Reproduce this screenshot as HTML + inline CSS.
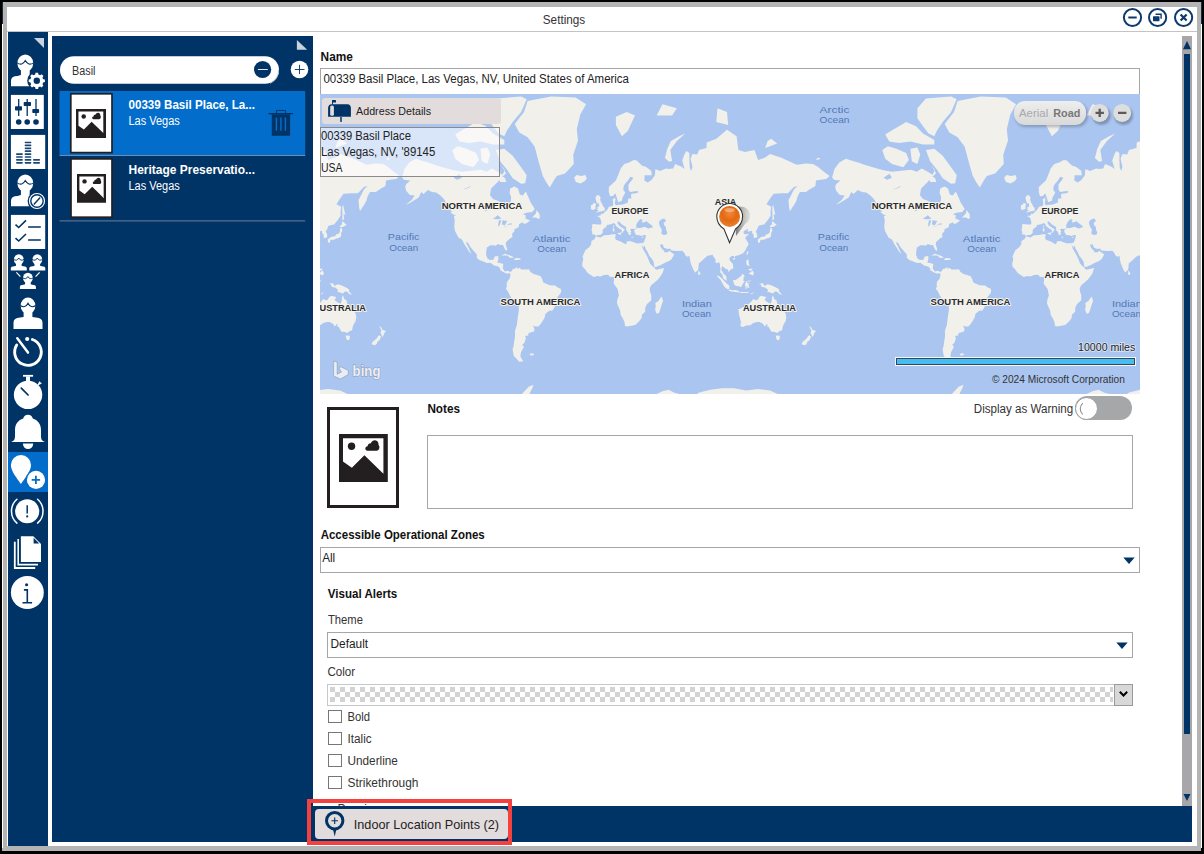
<!DOCTYPE html>
<html><head><meta charset="utf-8">
<style>
*{margin:0;padding:0;box-sizing:border-box}
html,body{width:1204px;height:854px;overflow:hidden;background:#000;font-family:"Liberation Sans",sans-serif}
.a{position:absolute}
.t{position:absolute;white-space:nowrap;line-height:1}
#frame{left:2px;top:2px;width:1199px;height:849px;background:#b4b4b4}
#win{left:7px;top:7px;width:1190px;height:839px;background:#fff}
#tline{left:7px;top:31px;width:1190px;height:1px;background:#c4c4c4}
#nav{left:8px;top:32px;width:40px;height:814px;background:#003366}
#navsel{left:8px;top:452px;width:40px;height:40px;background:#026dcb}
#list{left:52px;top:36px;width:261px;height:806px;background:#003366}
#bbar{left:313px;top:806px;width:879px;height:36px;background:#003366}
.lbl{font-size:11.5px;color:#111;font-weight:bold}
.txt{font-size:11.5px;color:#222}
.inp{border:1px solid #a6a6a6;background:#fff}
.cb{width:14px;height:13px;border:1px solid #767676;background:#fff}
.ml{font-family:"Liberation Sans",sans-serif;font-weight:bold;font-size:9px;fill:#2b2b2b;stroke:#f4f3ef;stroke-width:2;paint-order:stroke;stroke-linejoin:round}
.ol{font-family:"Liberation Sans",sans-serif;font-size:9px;fill:#5478b4;letter-spacing:0.6px}
</style></head>
<body>
<div class="a" id="frame"></div>
<div class="a" id="win"></div>
<div class="a" style="left:2px;top:24px;width:1px;height:824px;background:#fff"></div>
<div class="a" style="left:1.8px;top:2px;width:1.2px;height:22px;background:#1b2a40"></div>
<div class="a" style="left:1201px;top:2px;width:1px;height:22px;background:#1b2a40"></div>
<div class="a" style="left:1201px;top:24px;width:1px;height:824px;background:#fff"></div>
<div class="a" id="tline"></div>
<svg class="a" style="left:1120px;top:5px" width="76" height="26" viewBox="1120 5 76 26">
 <g fill="none" stroke="#0d3a6e" stroke-width="2">
  <circle cx="1132.5" cy="17.5" r="8.6"/>
  <circle cx="1157.6" cy="17.5" r="8.6"/>
  <circle cx="1183.6" cy="17.5" r="8.6"/>
  <path d="M1128.3 17.5h8.4"/>
  <path d="M1180.6 14.5l6 6M1186.6 14.5l-6 6" stroke-width="2.2"/>
 </g>
 <g fill="#0d3a6e">
  <rect x="1153" y="16.2" width="6.5" height="5" rx="0.6"/>
  <path d="M1155.6 13.6h6.2v5.2h-1.4v-3.8h-4.8z"/>
 </g>
</svg>
<div class="a" id="nav"></div>
<div class="a" id="navsel"></div>
<svg class="a" style="left:0;top:0" width="60" height="854" viewBox="0 0 60 854">
<polygon points="34,38 44,38 44,48" fill="#c9d3df"/>
<ellipse cx="25.3" cy="63.2" rx="7.9" ry="8.6" fill="#fff"/><path d="M11.0 86.2 L11.0 80.70 Q11.0 76.20 17.43 76.00 L20.9 75 L20.9 67.50 L29.700000000000003 67.50 L29.700000000000003 75 L33.16 76.00 Q39.6 76.20 39.6 80.70 L39.6 86.2 Z" fill="#fff"/><path d="M16.9 62.90 C20.56 65.09 23.32 64.49 25.3 60.62 C27.28 64.49 30.04 65.09 33.7 62.90" fill="none" stroke="#003366" stroke-width="1.1"/>
<circle cx="36.8" cy="80.8" r="9.6" fill="#003366"/>
<path d="M43.20 79.20 L44.90 79.52 L44.90 82.08 L43.20 82.40 L42.46 84.19 L43.43 85.62 L41.62 87.43 L40.19 86.46 L38.40 87.20 L38.08 88.90 L35.52 88.90 L35.20 87.20 L33.41 86.46 L31.98 87.43 L30.17 85.62 L31.14 84.19 L30.40 82.40 L28.70 82.08 L28.70 79.52 L30.40 79.20 L31.14 77.41 L30.17 75.98 L31.98 74.17 L33.41 75.14 L35.20 74.40 L35.52 72.70 L38.08 72.70 L38.40 74.40 L40.19 75.14 L41.62 74.17 L43.43 75.98 L42.46 77.41Z" fill="#fff"/><circle cx="36.8" cy="80.8" r="3.2" fill="#003366"/>
<rect x="10.9" y="94.9" width="32.9" height="34.1" fill="#fff"/>
<g fill="#003366"><rect x="18.05" y="99" width="1.3" height="17"/><rect x="26.55" y="99" width="1.3" height="17"/><rect x="35.35" y="99" width="1.3" height="17"/><rect x="15" y="106.3" width="7" height="4.2" rx="0.8"/><rect x="23.7" y="102" width="7.3" height="4" rx="0.8"/><rect x="32.3" y="109.1" width="6.8" height="4" rx="0.8"/><circle cx="18.7" cy="122" r="2.8"/><circle cx="27.2" cy="122" r="2.8"/><circle cx="36" cy="122" r="2.8"/></g>
<rect x="10.9" y="134.9" width="34.3" height="34.1" fill="#fff"/>
<g fill="#003366" opacity="0.9"><rect x="24.6" y="141.65" width="6.8" height="1.7" rx="0.8"/><rect x="24.6" y="144.55" width="6.8" height="1.7" rx="0.8"/><rect x="24.6" y="147.45" width="6.8" height="1.7" rx="0.8"/><rect x="24.6" y="150.35" width="6.8" height="1.7" rx="0.8"/><rect x="16" y="153.25" width="6.9" height="1.7" rx="0.8"/><rect x="24.6" y="153.25" width="6.8" height="1.7" rx="0.8"/><rect x="16" y="156.15" width="6.9" height="1.7" rx="0.8"/><rect x="24.6" y="156.15" width="6.8" height="1.7" rx="0.8"/><rect x="16" y="159.05" width="6.9" height="1.7" rx="0.8"/><rect x="24.6" y="159.05" width="6.8" height="1.7" rx="0.8"/><rect x="33" y="159.05" width="7.1" height="1.7" rx="0.8"/><rect x="16" y="161.95" width="6.9" height="1.7" rx="0.8"/><rect x="24.6" y="161.95" width="6.8" height="1.7" rx="0.8"/><rect x="33" y="161.95" width="7.1" height="1.7" rx="0.8"/></g>
<ellipse cx="25.3" cy="183.2" rx="7.9" ry="8.6" fill="#fff"/><path d="M11.0 206.2 L11.0 200.70 Q11.0 196.20 17.43 196.00 L20.9 195 L20.9 187.50 L29.700000000000003 187.50 L29.700000000000003 195 L33.16 196.00 Q39.6 196.20 39.6 200.70 L39.6 206.2 Z" fill="#fff"/><path d="M16.9 182.90 C20.56 185.09 23.32 184.49 25.3 180.62 C27.28 184.49 30.04 185.09 33.7 182.90" fill="none" stroke="#003366" stroke-width="1.1"/>
<circle cx="37" cy="201" r="9.4" fill="#003366"/><circle cx="37" cy="201" r="7.5" fill="none" stroke="#fff" stroke-width="1.2"/><circle cx="37" cy="201" r="5.5" fill="#fff"/><path d="M40.2 197.6L33.8 204.4" stroke="#003366" stroke-width="1.4"/>
<rect x="10.9" y="214.9" width="34.3" height="34.1" fill="#fff"/>
<g fill="none" stroke="#003366" stroke-width="1.6"><path d="M15.5 224.6L18.7 227.5L26 220.4"/><path d="M15.5 238.2L18.7 241L26 234"/><path d="M28.1 227H40.8M28.1 240H40.8"/></g>
<ellipse cx="18.8" cy="259.6" rx="4.9" ry="5.3" fill="#fff"/><path d="M10.8 270.5 L10.8 268.30 Q10.8 266.50 14.40 266.30 L16.0 265.8 L16.0 262.25 L21.6 262.25 L21.6 265.8 L23.20 266.30 Q26.8 266.50 26.8 268.30 L26.8 270.5 Z" fill="#fff"/><path d="M13.4 259.30 C15.86 260.77 17.57 260.40 18.8 258.01 C20.03 260.40 21.74 260.77 24.200000000000003 259.30" fill="none" stroke="#003366" stroke-width="0.9"/>
<ellipse cx="37.3" cy="259.6" rx="4.9" ry="5.3" fill="#fff"/><path d="M29.299999999999997 270.5 L29.299999999999997 268.30 Q29.299999999999997 266.50 32.90 266.30 L34.5 265.8 L34.5 262.25 L40.099999999999994 262.25 L40.099999999999994 265.8 L41.70 266.30 Q45.3 266.50 45.3 268.30 L45.3 270.5 Z" fill="#fff"/><path d="M31.9 259.30 C34.36 260.77 36.07 260.40 37.3 258.01 C38.52 260.40 40.24 260.77 42.699999999999996 259.30" fill="none" stroke="#003366" stroke-width="0.9"/>
<ellipse cx="27.9" cy="278.1" rx="4.9" ry="5.3" fill="#fff"/><path d="M19.9 289 L19.9 286.80 Q19.9 285.00 23.50 284.80 L25.099999999999998 284.3 L25.099999999999998 280.75 L30.7 280.75 L30.7 284.3 L32.30 284.80 Q35.9 285.00 35.9 286.80 L35.9 289 Z" fill="#fff"/><path d="M22.5 277.80 C24.96 279.27 26.67 278.90 27.9 276.51 C29.12 278.90 30.84 279.27 33.3 277.80" fill="none" stroke="#003366" stroke-width="0.9"/>
<path d="M16.4 272.4L20.4 276.6M39.6 272.4L35.6 276.6" stroke="#fff" stroke-width="1.2"/>
<ellipse cx="28" cy="305.8" rx="7.4" ry="8.2" fill="#fff"/><path d="M13.5 329 L13.5 322.84 Q13.5 317.80 20.02 317.60 L23.6 317 L23.6 309.90 L32.4 309.90 L32.4 317 L35.98 317.60 Q42.5 317.80 42.5 322.84 L42.5 329 Z" fill="#fff"/><path d="M20.1 305.50 C23.56 307.60 26.15 307.03 28 303.34 C29.85 307.03 32.44 307.60 35.9 305.50" fill="none" stroke="#003366" stroke-width="1.1"/>
<path d="M16.7 345A13.3 13.3 0 1 0 32.4 339.5" fill="none" stroke="#fff" stroke-width="2.9" stroke-linecap="round"/>
<path d="M17.3 338.2L28 352.6" stroke="#fff" stroke-width="2.5" stroke-linecap="round"/><circle cx="27.2" cy="339" r="2.1" fill="#fff"/>
<circle cx="28.05" cy="394.85" r="14.2" fill="#fff"/><rect x="23" y="374.9" width="10.1" height="1.8" fill="#fff"/><rect x="26" y="376.5" width="4" height="4.5" fill="#fff"/>
<polygon points="37.2,385.8 39.2,381.3 41.9,383.5" fill="#fff"/>
<path d="M21.3 388.2L28.1 395" stroke="#003366" stroke-width="1.7" stroke-linecap="round"/>
<path d="M10.8 442 C13.5 441.2 15 440 15 436 L15 430 C15 424 18.5 420.2 23.2 418.6 C23.8 416.2 25.5 414.8 28 414.8 C30.5 414.8 32.2 416.2 32.8 418.6 C37.5 420.2 41 424 41 430 L41 436 C41 440 42.5 441.2 45.2 442 Z" fill="#fff"/>
<path d="M22.9 443.5 H33.2 A5.15 5.5 0 0 1 22.9 443.5Z" fill="#fff"/>
<path d="M20.9 484.1 C17 478 10.9 471.5 10.9 465 A10.05 10.05 0 0 1 31 465 C31 471.5 24.8 478 20.9 484.1Z" fill="#fff"/>
<circle cx="36" cy="479.9" r="10.3" fill="#026dcb"/><circle cx="36" cy="479.9" r="9.1" fill="#fff"/>
<path d="M31.7 479.9H40.1M35.9 475.7V484.1" stroke="#026dcb" stroke-width="1.8"/>
<circle cx="27.2" cy="511.2" r="12.05" fill="#fff"/><path d="M27.2 505.3V513.5" stroke="#003366" stroke-width="1.5"/><circle cx="27.2" cy="516.4" r="1.1" fill="#003366"/>
<path d="M16.9 499.3A15.8 15.8 0 0 0 16.9 523.1M37.6 499.3A15.8 15.8 0 0 1 37.6 523.1" fill="none" stroke="#fff" stroke-width="1.5" stroke-linecap="round"/>
<path d="M13.9 541.8H15.7V567.1H35.2V569H13.9Z" fill="#fff"/><path d="M17.4 539H19V563.8H38V565.5H17.4Z" fill="#fff"/>
<polygon points="20.9,536.2 33.3,536.2 41,543.9 41,562 20.9,562" fill="#fff"/><polygon points="33.6,537.8 33.6,543.4 39.2,543.4" fill="#003366"/>
<circle cx="27.35" cy="592.5" r="16.45" fill="#fff"/><circle cx="26.6" cy="584.7" r="1.55" fill="#003366"/>
<path d="M23.9 589.9H27.3V602.7M22.5 602.7H32.1" fill="none" stroke="#003366" stroke-width="1.6"/>
</svg>
<div class="a" id="list"></div>
<svg class="a" style="left:52px;top:36px" width="261" height="200" viewBox="52 36 261 200">
 <polygon points="296.9,39.9 296.9,49.8 307.2,49.8" fill="#c9d3df"/>
 <rect x="60" y="56.2" width="219" height="27.6" rx="13.8" fill="#fff"/>
 <path d="M270 83.3 A13.5 13.5 0 0 0 278.6 70" fill="none" stroke="#b8bcc4" stroke-width="1"/>
 <circle cx="262.6" cy="69.5" r="8.6" fill="#003366"/><path d="M257.9 69.5H267.8" stroke="#fff" stroke-width="0.9"/>
 <circle cx="299.5" cy="69.5" r="8.8" fill="#fff"/><path d="M294.8 69.5H304.5M299.5 64.8V74.1" stroke="#003366" stroke-width="0.9"/>
 <rect x="59.5" y="91" width="245.7" height="64" fill="#026dcb"/>
 <rect x="59.5" y="155" width="245.7" height="1" fill="#6f8db0"/>
 <rect x="59.5" y="220.4" width="245.7" height="1" fill="#6b7f99"/>
 <rect x="70.8" y="93.8" width="41.2" height="58.8" fill="#fff" stroke="#231f20" stroke-width="1.7"/>
 <rect x="71" y="158.9" width="41" height="58.3" fill="#fff" stroke="#231f20" stroke-width="1.7"/>
 <g fill="#003366"><rect x="268.6" y="113" width="24.5" height="1.3"/><path d="M276.5 113.2V110.5H285.5V113.2" fill="none" stroke="#003366" stroke-width="0.9"/>
 <path fill-rule="evenodd" d="M271.8 114.3H290.1V135.8H271.8Z M275.65 117.6V130.7H277.15V117.6Z M280.15 117.6V130.7H281.65V117.6Z M284.65 117.6V130.7H286.15V117.6Z"/></g>
</svg>
<svg class="a" style="left:76.3px;top:108.5px" width="30" height="29" viewBox="0 0 49 48" preserveAspectRatio="none"><path fill="#231f20" fill-rule="evenodd" d="M0 0H49V48H0Z M4 4.3V27.6L12.9 33.8L25.5 21.2L44.6 39.9V4.3Z"/><circle cx="12.6" cy="12.3" r="3.7" fill="#231f20"/><path fill="#231f20" d="M28.6 16.8C27.2 16.8 26.4 15.8 26.4 14.6C26.4 13.3 27.4 12.3 28.7 12.3C28.9 10.4 30.3 9.2 32 9.3C32.8 7.3 34.4 6.1 36.2 6.2C38.6 6.4 40 8.4 39.7 10.9C40.3 11.5 40.6 12.4 40.6 13.4C40.6 15.3 39.4 16.8 37.6 16.8Z"/></svg>
<svg class="a" style="left:76.8px;top:173.9px" width="29.3" height="28.8" viewBox="0 0 49 48" preserveAspectRatio="none"><path fill="#231f20" fill-rule="evenodd" d="M0 0H49V48H0Z M4 4.3V27.6L12.9 33.8L25.5 21.2L44.6 39.9V4.3Z"/><circle cx="12.6" cy="12.3" r="3.7" fill="#231f20"/><path fill="#231f20" d="M28.6 16.8C27.2 16.8 26.4 15.8 26.4 14.6C26.4 13.3 27.4 12.3 28.7 12.3C28.9 10.4 30.3 9.2 32 9.3C32.8 7.3 34.4 6.1 36.2 6.2C38.6 6.4 40 8.4 39.7 10.9C40.3 11.5 40.6 12.4 40.6 13.4C40.6 15.3 39.4 16.8 37.6 16.8Z"/></svg>
<div class="a" id="bbar"></div>

<!-- scrollbar -->
<div class="a" style="left:1182px;top:36px;width:10px;height:770px;background:#a7a7ab"></div>
<div class="a" style="left:1184px;top:54px;width:6px;height:680px;background:#003366"></div>
<svg class="a" style="left:1182px;top:36px" width="10" height="770">
 <path d="M1 13.3L5 5L9 13.3z" fill="#003366"/>
 <path d="M1.5 758L5 765L8.5 758z" fill="#003366"/>
</svg>

<!-- content -->
<div class="a inp" style="left:320px;top:68px;width:820px;height:27px"></div>

<svg class="a" style="left:320px;top:94px" width="820" height="300" viewBox="0 0 820 300">
<rect width="820" height="300" fill="#aac6f0"/>
<g transform="translate(-430 0)"><path d="M82.1 83.4 84.5 75.1 89.3 68.4 95.9 64.7 101.2 66.6 109.6 69.1 114.4 70.8 122.7 73.2 132.3 76.1 141.9 77.7 151.4 76.7 161.0 75.8 166.9 77.7 171.7 74.5 177.7 77.7 182.5 80.7 184.9 76.1 181.3 71.2 186.1 79.2 180.1 85.1 177.7 87.9 171.1 94.4 169.9 100.9 172.9 104.9 177.1 106.5 181.3 108.6 184.5 109.2 184.6 113.5 187.2 116.6 188.4 115.2 188.7 110.2 190.8 107.1 191.1 102.7 189.6 99.3 190.2 94.4 194.4 92.4 198.0 94.4 199.8 100.4 202.8 101.6 205.8 97.4 208.7 103.8 210.5 108.2 214.7 114.7 212.3 118.1 206.4 118.7 202.8 120.3 205.8 121.2 205.4 124.4 209.9 126.5 211.1 125.8 207.0 129.1 204.0 129.9 202.8 128.2 199.2 130.1 198.6 133.3 194.4 135.2 194.4 137.5 192.6 139.1 192.0 140.9 192.6 143.1 190.2 144.2 188.4 146.1 186.1 148.1 185.7 150.6 187.2 155.0 186.6 157.1 185.1 155.4 183.9 153.3 183.1 150.9 180.7 150.9 177.7 149.9 175.9 151.7 173.5 151.3 170.5 151.2 166.9 153.6 166.3 157.3 166.0 160.6 167.5 164.4 169.9 166.1 173.5 165.7 174.7 162.5 178.3 161.9 178.3 165.7 177.3 168.8 180.1 169.0 183.3 170.1 182.8 174.4 184.9 177.4 187.8 176.7 190.5 178.0 189.6 179.2 186.6 179.5 183.7 178.3 180.3 176.2 180.1 174.6 178.3 172.5 174.1 171.4 170.5 168.8 166.9 169.1 163.4 167.6 159.2 166.0 156.8 163.8 156.8 160.6 153.8 157.1 150.2 152.7 148.1 148.8 145.7 148.2 147.8 152.0 149.6 156.0 151.4 160.0 149.0 157.6 146.4 153.3 144.2 149.9 142.8 146.8 141.3 145.0 138.8 144.1 136.5 139.8 134.9 136.8 134.3 132.8 134.7 126.2 133.9 122.0 135.9 122.1 132.9 118.5 129.9 115.2 126.9 110.2 123.9 104.9 120.4 101.6 116.2 98.5 112.0 98.1 107.8 96.1 103.6 100.0 101.2 98.1 98.9 103.2 94.7 106.0 89.3 109.2 86.0 110.4 91.7 106.0 94.7 101.6 89.9 101.1 86.3 96.9 85.1 93.1 86.3 90.0 90.5 86.5 87.5 86.2 83.9 85.7zM194.7 29.9 204.0 17.9 207.6 7.0 231.0 2.6 255.6 3.5 266.1 10.3 260.2 20.8 256.8 35.2 258.0 46.6 253.2 60.9 253.8 70.1 245.1 79.5 236.8 81.9 233.8 86.5 229.8 93.6 226.1 87.9 222.8 81.9 219.3 70.1 214.6 52.6 207.6 43.2 199.3 38.5zM175.9 56.0 184.3 54.8 192.7 61.7 201.1 73.2 206.7 81.3 205.2 89.2 201.1 89.8 192.7 84.3 187.1 75.8 180.1 67.3zM167.4 14.2 175.9 4.4 201.1 2.6 206.7 5.3 201.1 17.9 192.7 28.0 187.1 36.3 184.3 42.2 178.6 39.5 173.0 32.3 167.4 24.2zM135.2 40.6 142.1 36.3 156.2 28.0 166.0 32.3 173.0 39.5 184.3 46.1 184.3 50.4 173.0 50.4 160.4 47.6 149.1 49.0 139.3 47.6zM132.3 56.0 137.9 52.2 146.4 54.8 156.2 58.9 158.9 65.9 153.3 73.2 142.1 70.1 135.2 64.7zM186.1 87.9 180.1 87.9 178.9 83.7 182.5 81.3 185.5 85.1zM160.4 54.8 167.4 53.5 170.3 60.5 167.4 70.1 161.8 67.3zM212.0 123.4 215.9 119.4 216.5 116.0 219.5 120.0 219.9 123.6 218.9 125.1 215.9 123.4zM181.3 161.4 184.9 159.8 190.2 161.5 194.2 163.6 190.2 163.9 187.2 161.5 183.1 161.4zM193.8 165.7 195.8 163.9 199.8 164.3 201.1 165.6 198.0 166.1 194.2 166.1zM135.3 122.0 129.6 117.5 133.1 118.3zM190.5 178.0 192.0 176.8 192.6 175.2 195.2 174.6 197.0 173.3 197.8 174.4 197.4 175.6 199.2 173.8 201.6 175.6 206.4 175.5 209.0 175.3 210.5 178.0 213.5 180.1 217.1 181.0 220.7 182.2 222.5 185.8 223.1 188.2 225.5 189.4 229.6 191.2 235.0 191.5 238.6 193.9 240.8 194.8 241.2 197.2 240.4 199.6 238.4 202.0 236.5 204.5 236.2 209.4 234.4 213.2 232.6 216.4 229.3 216.8 225.5 219.7 224.6 223.7 222.5 227.2 220.1 230.7 218.3 232.6 215.3 232.6 212.9 231.4 214.5 234.8 214.1 237.6 208.7 238.9 208.1 241.5 205.2 242.0 205.8 244.4 204.6 248.5 202.2 251.1 204.0 252.8 201.0 258.3 200.4 261.7 201.0 263.7 203.4 267.2 199.2 267.8 196.8 265.1 193.8 262.1 192.6 255.5 193.8 251.1 194.4 246.0 195.0 242.8 195.0 236.6 196.8 231.4 197.4 226.5 198.0 221.7 198.8 217.1 199.0 210.7 196.2 208.6 192.0 205.1 190.2 202.0 187.8 197.2 185.8 194.8 186.9 192.4 186.6 190.0 187.2 187.6 188.4 186.2 189.6 184.6 190.2 182.8 190.5 180.4 189.8 179.2zM209.6 259.8 213.5 259.2 213.8 261.2 210.5 261.6zM275.8 142.3 280.4 143.4 284.0 141.3 288.8 140.9 294.5 140.1 295.9 140.7 295.0 143.5 295.9 145.7 300.7 147.4 305.5 150.2 306.7 149.2 306.7 147.4 310.3 147.1 312.7 148.1 317.4 149.5 321.0 148.9 321.7 150.7 322.8 154.7 325.2 158.7 327.2 162.5 328.8 166.3 330.0 169.5 332.4 171.9 334.5 173.8 336.0 175.7 344.0 174.0 343.7 175.6 342.5 179.2 340.1 182.8 337.7 185.8 334.2 188.8 331.2 191.2 329.7 194.2 330.0 197.8 331.2 200.8 331.3 206.3 327.0 210.1 325.2 213.9 325.2 217.7 322.0 220.4 321.6 224.0 319.2 227.2 315.6 230.7 312.7 231.4 306.7 232.6 304.9 231.7 304.7 228.6 302.5 223.7 300.7 221.0 300.1 216.4 297.7 211.3 296.9 208.8 297.7 204.5 298.9 201.4 297.7 195.4 297.1 194.2 293.6 189.4 294.1 185.8 294.5 183.4 293.0 182.8 290.0 183.1 288.2 180.7 284.0 181.0 280.4 182.5 277.4 182.0 273.8 182.9 269.1 180.1 266.9 178.0 264.9 175.0 262.7 173.1 262.1 170.4 263.3 165.1 262.5 162.5 265.5 156.0 269.1 153.3 271.1 150.6 271.5 147.1 274.7 145.0zM341.7 202.6 343.1 206.9 341.9 210.1 340.1 215.8 338.9 219.1 336.6 219.7 335.1 215.8 335.7 212.6 335.4 208.8 338.3 207.3 340.1 204.5zM276.1 142.1 275.3 140.9 274.0 140.3 272.1 140.6 272.3 138.0 271.5 136.0 272.3 132.8 271.7 131.2 273.2 130.1 278.0 130.4 281.0 130.5 281.4 127.9 280.2 124.1 277.2 122.1 280.6 121.4 281.2 119.6 283.0 120.0 284.7 118.1 286.6 116.6 288.2 114.3 288.8 112.7 291.2 112.3 293.0 111.7 293.2 108.2 292.6 105.4 295.3 103.4 295.3 106.7 294.7 109.2 295.9 111.3 298.9 110.7 301.9 110.7 304.9 109.8 307.9 108.6 308.1 104.5 311.5 104.5 310.9 101.6 311.5 99.7 316.2 99.3 318.9 98.1 316.8 96.9 310.0 98.1 308.5 95.6 308.5 90.6 312.7 85.1 313.3 83.7 310.3 82.8 307.9 86.5 305.5 89.2 303.7 91.9 303.3 96.1 305.3 98.5 302.5 103.8 301.9 106.7 298.1 108.2 296.5 102.7 295.3 99.3 293.0 102.0 290.0 102.3 288.8 98.1 288.8 93.1 292.4 89.8 295.9 86.5 298.3 80.7 300.7 74.5 304.3 70.1 309.1 68.4 313.9 65.9 316.8 66.6 319.8 69.4 322.2 71.8 325.8 72.8 331.2 76.7 331.8 81.3 324.6 81.3 324.4 86.5 327.6 88.4 331.2 86.2 334.8 81.6 335.4 75.1 337.7 76.1 340.1 77.1 346.1 74.5 348.5 75.1 353.3 74.5 355.1 70.1 361.6 72.8 364.6 75.1 362.2 66.6 364.6 60.1 366.4 56.9 369.4 58.9 369.4 65.9 369.8 73.8 371.2 77.1 372.4 72.8 370.6 64.7 372.4 60.1 377.2 60.5 379.0 56.0 386.5 53.9 386.7 48.5 396.3 44.7 407.0 35.7 416.6 42.2 418.4 56.0 424.9 58.1 434.5 56.0 438.1 65.9 445.2 63.6 450.0 60.1 462.0 64.0 473.9 69.4 476.9 70.8 485.9 69.4 493.0 70.1 497.8 72.8 503.8 77.7 509.7 81.9 506.2 85.1 500.2 85.7 496.0 86.5 495.4 91.9 489.4 95.6 485.9 98.1 479.9 98.1 477.5 102.7 476.3 107.1 473.9 111.3 472.1 113.7 470.0 117.2 469.1 113.3 468.5 106.0 470.3 102.7 473.9 95.6 477.5 91.9 473.9 93.1 467.9 99.3 462.0 99.3 453.6 99.7 450.6 103.8 446.4 110.2 451.2 112.7 450.6 117.2 450.6 121.8 447.6 126.2 444.1 130.4 440.2 131.2 438.1 132.3 437.5 134.7 435.7 137.5 437.2 140.6 437.2 143.2 433.9 144.2 433.5 140.6 432.1 139.1 432.1 136.8 427.7 137.7 427.9 134.7 423.7 137.2 423.5 139.1 424.9 140.3 429.1 140.1 426.1 142.8 425.2 144.2 427.1 147.1 428.4 149.2 428.5 150.9 426.7 153.3 425.5 156.0 423.1 159.2 419.3 160.9 415.4 161.9 414.2 163.4 413.7 161.9 411.7 161.9 410.0 163.4 409.2 165.1 410.6 167.6 412.8 169.7 413.4 173.4 413.0 174.5 410.4 175.8 408.2 177.9 408.0 175.6 405.8 175.0 403.4 172.9 402.2 171.9 401.3 175.8 402.6 178.1 403.8 179.9 405.2 181.0 406.4 182.8 406.4 185.2 407.3 186.5 406.4 186.6 403.8 184.9 402.6 182.0 402.4 180.4 400.2 178.6 400.5 175.0 399.5 168.2 396.6 169.1 395.4 168.8 395.7 165.7 393.3 162.5 392.4 160.6 390.9 161.3 388.5 161.6 386.5 162.5 384.3 164.4 381.1 167.6 378.7 169.5 378.6 172.5 378.1 175.8 375.4 178.5 373.9 176.8 372.1 172.8 370.6 168.8 369.8 165.1 369.5 161.9 367.0 162.8 365.2 160.9 364.4 159.0 362.3 156.8 356.9 157.1 351.5 156.4 350.0 154.4 347.3 155.1 343.7 153.6 342.9 150.6 340.1 150.6 340.7 153.3 342.5 155.4 344.3 156.9 344.1 158.3 347.9 158.3 349.9 156.3 350.0 157.6 352.7 159.3 354.2 160.6 352.7 163.2 351.5 165.3 349.1 167.0 344.9 168.8 341.3 170.7 336.6 172.8 334.5 172.9 333.9 170.1 333.6 167.6 331.5 164.4 329.4 161.9 327.6 158.0 325.6 154.7 324.5 151.3 323.8 153.6 321.7 150.7 321.4 148.9 323.6 148.8 324.6 146.4 325.6 143.5 325.8 140.9 324.0 140.9 321.6 141.9 319.2 141.3 316.2 140.9 314.5 138.3 314.2 136.0 317.4 134.1 320.4 134.1 324.6 132.8 328.2 134.4 332.4 133.6 332.6 132.0 330.6 130.4 327.6 128.2 326.5 127.2 325.2 127.7 322.8 128.7 321.6 127.0 322.8 126.0 320.4 125.1 318.6 127.0 317.2 128.7 316.0 132.0 316.8 133.9 314.5 135.0 311.5 134.7 310.0 135.2 311.2 137.2 310.3 139.1 311.5 139.5 309.7 141.3 308.6 140.6 308.1 138.6 306.1 136.0 306.1 133.1 301.9 130.4 299.0 127.5 297.5 127.4 297.7 129.6 299.5 132.0 301.9 133.6 304.9 135.8 303.1 137.5 302.5 139.1 301.6 139.1 301.9 136.8 301.4 135.8 299.5 134.7 297.7 133.3 295.9 132.0 295.3 129.9 293.3 128.9 291.8 129.9 288.8 130.7 286.6 130.9 286.6 132.8 283.8 134.4 282.4 136.8 283.0 137.8 282.0 139.7 280.2 141.0 277.5 141.0zM378.1 176.4 380.5 179.2 379.8 180.8 378.4 181.0 378.1 178.6zM276.0 118.8 279.2 117.7 284.5 116.8 284.8 113.9 283.2 112.5 282.2 110.2 280.9 107.9 280.2 105.8 280.6 103.6 279.0 101.3 276.8 101.3 275.4 103.8 276.1 106.5 276.9 109.2 279.1 109.4 279.0 111.3 279.3 112.7 277.3 112.7 277.8 114.7 276.6 115.6 278.9 116.4 277.4 117.2zM275.6 114.8 275.4 112.3 276.2 110.0 273.8 108.8 272.6 110.7 270.9 111.3 270.9 115.2 272.6 116.0zM255.9 87.9 254.1 83.7 256.5 81.0 261.3 81.9 265.5 81.0 266.7 84.5 264.9 87.1 260.5 89.5 257.7 88.4zM295.9 31.1 301.9 42.2 307.9 36.8 315.0 21.5 306.7 17.9 295.9 22.8zM344.9 64.0 349.1 67.7 352.1 66.9 350.3 56.0 356.9 47.1 365.2 39.5 359.2 42.2 350.9 47.1 347.3 54.8zM336.6 21.5 352.1 21.5 356.9 14.2 342.5 10.3zM396.3 28.0 408.2 31.1 407.0 17.9 397.5 14.2zM445.2 53.9 457.2 49.4 451.2 44.7 447.6 47.1zM496.0 65.9 500.8 65.1 497.8 63.6zM452.4 126.2 454.2 125.3 453.6 120.0 455.4 120.9 453.6 113.3 453.2 110.7 452.2 113.3 452.4 119.0zM438.1 148.5 439.9 148.7 440.5 145.7 444.1 145.7 446.2 144.5 448.8 144.0 451.0 142.5 451.2 138.8 452.4 136.8 451.7 133.8 450.0 134.7 450.0 136.8 449.4 139.1 447.0 140.6 446.2 140.1 445.2 142.3 441.7 142.8 439.3 144.2 437.7 145.7zM450.0 133.6 451.5 133.1 453.8 132.8 456.6 130.7 454.8 129.2 452.4 127.0 451.8 130.4 450.0 132.0zM426.4 160.1 427.2 161.3 428.4 158.0 427.9 156.9 427.0 158.0zM412.5 164.8 414.8 163.7 415.4 164.3 413.8 166.1zM426.1 168.8 426.9 165.7 428.9 165.7 428.5 167.6 429.1 171.1 430.9 172.5 429.7 171.9 427.9 171.6 426.9 170.9zM428.5 179.8 432.7 176.4 434.0 179.5 432.7 181.4 430.9 180.4zM428.5 175.0 432.7 174.4 431.5 176.4 429.7 176.8zM413.0 186.4 413.7 185.8 415.4 186.3 417.8 184.4 420.8 182.2 422.6 179.8 424.3 181.6 424.9 182.3 423.7 182.8 423.4 187.0 424.9 187.0 423.1 189.4 422.0 191.2 421.4 193.0 419.6 192.4 415.4 191.8 414.2 190.4 413.6 188.2zM396.6 181.5 399.3 182.0 402.6 185.2 406.7 189.4 409.4 191.8 409.3 195.1 407.6 195.3 404.6 193.0 402.6 189.4 400.8 186.2 398.7 184.0zM408.5 196.3 410.0 195.4 412.4 196.2 415.4 196.0 417.3 196.5 419.6 197.4 419.6 198.6 415.4 198.0 411.8 197.5 409.4 196.9zM425.4 194.8 425.5 191.8 424.7 191.2 425.9 188.2 426.7 187.0 431.7 186.4 429.7 187.6 426.7 187.6 427.9 189.4 430.1 189.4 428.3 190.6 429.5 193.6 427.9 193.9 426.7 191.8 426.5 194.8zM430.9 199.6 434.5 198.3 432.7 199.6 430.9 200.4zM420.2 198.1 424.9 198.1 428.5 198.1 428.5 198.9 423.7 199.0 420.2 198.9zM439.3 189.4 442.9 189.2 444.6 192.1 447.6 190.2 451.2 191.3 457.0 193.9 459.0 195.6 459.3 197.8 462.0 200.6 459.6 200.3 457.2 197.8 454.8 197.4 453.0 199.4 451.2 199.0 448.8 197.9 447.6 198.3 447.4 197.2 448.2 196.0 445.2 193.6 442.3 193.0 440.5 191.5 442.0 190.9 439.3 189.8zM418.4 215.1 419.0 220.4 420.2 225.1 421.0 228.6 420.2 231.9 423.1 233.0 426.1 231.4 430.3 231.3 433.3 229.0 436.9 228.0 439.5 227.9 442.9 229.7 444.8 232.6 447.3 229.4 447.4 233.0 448.2 232.6 449.4 234.1 451.2 237.5 454.8 238.1 457.5 238.9 459.6 237.0 462.0 236.6 462.9 232.2 463.8 230.0 465.6 227.2 466.3 223.1 465.6 219.5 462.9 215.8 460.8 213.2 457.5 211.1 456.5 206.3 454.2 205.1 453.0 201.2 451.9 203.6 451.8 206.9 450.6 209.4 449.1 209.2 446.1 207.3 444.6 206.1 446.3 203.0 444.1 202.6 441.2 201.8 439.3 202.9 437.5 206.1 435.7 206.3 433.3 205.1 430.9 207.9 428.8 210.1 427.3 212.1 424.3 213.0 422.2 213.4 419.6 214.9zM455.6 241.5 459.9 241.8 459.6 245.5 457.2 246.2 456.2 243.9zM489.1 232.0 491.2 233.6 492.4 235.8 496.0 236.9 494.2 239.3 493.0 242.5 491.8 242.6 491.4 240.1 490.4 239.2 491.4 236.6zM489.1 241.2 491.0 242.5 490.4 244.4 489.2 246.5 487.3 247.7 486.7 250.1 484.7 251.3 481.7 250.2 482.3 248.2 484.2 246.5 486.5 244.7 488.2 242.0zM193.2 314.3 201.6 300.3 208.7 292.7 213.5 290.7 212.3 294.2 209.9 298.7 208.7 307.0 211.1 327.0 193.2 354.9zM270.9 310.5 282.8 307.0 294.7 307.0 306.7 307.0 318.6 306.3 330.6 302.9 342.5 297.2 348.5 295.7 354.5 298.7 366.4 301.9 372.4 305.2 378.4 298.7 390.3 295.7 402.2 294.2 414.2 294.2 426.1 296.6 438.1 295.1 450.0 296.6 462.0 301.9 473.9 307.0 479.9 309.8 485.9 312.4 485.9 402.5 270.9 402.5zM297.6 138.9 301.4 138.6 300.8 141.0 297.7 139.7zM292.6 134.4 294.5 134.4 294.3 137.5 293.0 137.5zM293.1 131.4 294.1 131.4 294.0 133.8 293.3 133.5zM310.9 142.8 314.2 143.1 312.1 143.7zM321.4 143.5 324.1 142.6 322.8 144.1z" fill="#f1f0eb"/><path d="M339.5 127.0 341.6 125.3 344.3 124.4 346.1 127.0 343.7 128.7 344.1 131.2 345.9 133.1 346.1 136.0 347.3 138.3 346.7 140.6 343.7 141.0 341.3 139.8 341.9 135.7 340.1 132.8 339.5 131.2 338.9 128.7zM172.9 125.0 177.7 121.2 181.5 124.4 178.3 125.3zM177.9 132.8 178.9 126.2 181.3 126.5 179.7 131.2zM181.9 130.4 182.5 126.2 187.2 127.0 184.9 131.2zM187.5 130.7 192.0 130.4 191.7 129.2 187.8 130.1zM183.2 133.3 188.6 131.4 187.2 131.7 184.3 132.5zM164.6 117.2 166.9 111.3 167.5 116.2zM133.5 83.7 139.5 79.8 141.9 83.7 137.1 85.7zM143.1 95.6 150.8 91.9 150.2 93.1 145.4 94.9z" fill="#aac6f0"/></g>
<g><path d="M82.1 83.4 84.5 75.1 89.3 68.4 95.9 64.7 101.2 66.6 109.6 69.1 114.4 70.8 122.7 73.2 132.3 76.1 141.9 77.7 151.4 76.7 161.0 75.8 166.9 77.7 171.7 74.5 177.7 77.7 182.5 80.7 184.9 76.1 181.3 71.2 186.1 79.2 180.1 85.1 177.7 87.9 171.1 94.4 169.9 100.9 172.9 104.9 177.1 106.5 181.3 108.6 184.5 109.2 184.6 113.5 187.2 116.6 188.4 115.2 188.7 110.2 190.8 107.1 191.1 102.7 189.6 99.3 190.2 94.4 194.4 92.4 198.0 94.4 199.8 100.4 202.8 101.6 205.8 97.4 208.7 103.8 210.5 108.2 214.7 114.7 212.3 118.1 206.4 118.7 202.8 120.3 205.8 121.2 205.4 124.4 209.9 126.5 211.1 125.8 207.0 129.1 204.0 129.9 202.8 128.2 199.2 130.1 198.6 133.3 194.4 135.2 194.4 137.5 192.6 139.1 192.0 140.9 192.6 143.1 190.2 144.2 188.4 146.1 186.1 148.1 185.7 150.6 187.2 155.0 186.6 157.1 185.1 155.4 183.9 153.3 183.1 150.9 180.7 150.9 177.7 149.9 175.9 151.7 173.5 151.3 170.5 151.2 166.9 153.6 166.3 157.3 166.0 160.6 167.5 164.4 169.9 166.1 173.5 165.7 174.7 162.5 178.3 161.9 178.3 165.7 177.3 168.8 180.1 169.0 183.3 170.1 182.8 174.4 184.9 177.4 187.8 176.7 190.5 178.0 189.6 179.2 186.6 179.5 183.7 178.3 180.3 176.2 180.1 174.6 178.3 172.5 174.1 171.4 170.5 168.8 166.9 169.1 163.4 167.6 159.2 166.0 156.8 163.8 156.8 160.6 153.8 157.1 150.2 152.7 148.1 148.8 145.7 148.2 147.8 152.0 149.6 156.0 151.4 160.0 149.0 157.6 146.4 153.3 144.2 149.9 142.8 146.8 141.3 145.0 138.8 144.1 136.5 139.8 134.9 136.8 134.3 132.8 134.7 126.2 133.9 122.0 135.9 122.1 132.9 118.5 129.9 115.2 126.9 110.2 123.9 104.9 120.4 101.6 116.2 98.5 112.0 98.1 107.8 96.1 103.6 100.0 101.2 98.1 98.9 103.2 94.7 106.0 89.3 109.2 86.0 110.4 91.7 106.0 94.7 101.6 89.9 101.1 86.3 96.9 85.1 93.1 86.3 90.0 90.5 86.5 87.5 86.2 83.9 85.7zM194.7 29.9 204.0 17.9 207.6 7.0 231.0 2.6 255.6 3.5 266.1 10.3 260.2 20.8 256.8 35.2 258.0 46.6 253.2 60.9 253.8 70.1 245.1 79.5 236.8 81.9 233.8 86.5 229.8 93.6 226.1 87.9 222.8 81.9 219.3 70.1 214.6 52.6 207.6 43.2 199.3 38.5zM175.9 56.0 184.3 54.8 192.7 61.7 201.1 73.2 206.7 81.3 205.2 89.2 201.1 89.8 192.7 84.3 187.1 75.8 180.1 67.3zM167.4 14.2 175.9 4.4 201.1 2.6 206.7 5.3 201.1 17.9 192.7 28.0 187.1 36.3 184.3 42.2 178.6 39.5 173.0 32.3 167.4 24.2zM135.2 40.6 142.1 36.3 156.2 28.0 166.0 32.3 173.0 39.5 184.3 46.1 184.3 50.4 173.0 50.4 160.4 47.6 149.1 49.0 139.3 47.6zM132.3 56.0 137.9 52.2 146.4 54.8 156.2 58.9 158.9 65.9 153.3 73.2 142.1 70.1 135.2 64.7zM186.1 87.9 180.1 87.9 178.9 83.7 182.5 81.3 185.5 85.1zM160.4 54.8 167.4 53.5 170.3 60.5 167.4 70.1 161.8 67.3zM212.0 123.4 215.9 119.4 216.5 116.0 219.5 120.0 219.9 123.6 218.9 125.1 215.9 123.4zM181.3 161.4 184.9 159.8 190.2 161.5 194.2 163.6 190.2 163.9 187.2 161.5 183.1 161.4zM193.8 165.7 195.8 163.9 199.8 164.3 201.1 165.6 198.0 166.1 194.2 166.1zM135.3 122.0 129.6 117.5 133.1 118.3zM190.5 178.0 192.0 176.8 192.6 175.2 195.2 174.6 197.0 173.3 197.8 174.4 197.4 175.6 199.2 173.8 201.6 175.6 206.4 175.5 209.0 175.3 210.5 178.0 213.5 180.1 217.1 181.0 220.7 182.2 222.5 185.8 223.1 188.2 225.5 189.4 229.6 191.2 235.0 191.5 238.6 193.9 240.8 194.8 241.2 197.2 240.4 199.6 238.4 202.0 236.5 204.5 236.2 209.4 234.4 213.2 232.6 216.4 229.3 216.8 225.5 219.7 224.6 223.7 222.5 227.2 220.1 230.7 218.3 232.6 215.3 232.6 212.9 231.4 214.5 234.8 214.1 237.6 208.7 238.9 208.1 241.5 205.2 242.0 205.8 244.4 204.6 248.5 202.2 251.1 204.0 252.8 201.0 258.3 200.4 261.7 201.0 263.7 203.4 267.2 199.2 267.8 196.8 265.1 193.8 262.1 192.6 255.5 193.8 251.1 194.4 246.0 195.0 242.8 195.0 236.6 196.8 231.4 197.4 226.5 198.0 221.7 198.8 217.1 199.0 210.7 196.2 208.6 192.0 205.1 190.2 202.0 187.8 197.2 185.8 194.8 186.9 192.4 186.6 190.0 187.2 187.6 188.4 186.2 189.6 184.6 190.2 182.8 190.5 180.4 189.8 179.2zM209.6 259.8 213.5 259.2 213.8 261.2 210.5 261.6zM275.8 142.3 280.4 143.4 284.0 141.3 288.8 140.9 294.5 140.1 295.9 140.7 295.0 143.5 295.9 145.7 300.7 147.4 305.5 150.2 306.7 149.2 306.7 147.4 310.3 147.1 312.7 148.1 317.4 149.5 321.0 148.9 321.7 150.7 322.8 154.7 325.2 158.7 327.2 162.5 328.8 166.3 330.0 169.5 332.4 171.9 334.5 173.8 336.0 175.7 344.0 174.0 343.7 175.6 342.5 179.2 340.1 182.8 337.7 185.8 334.2 188.8 331.2 191.2 329.7 194.2 330.0 197.8 331.2 200.8 331.3 206.3 327.0 210.1 325.2 213.9 325.2 217.7 322.0 220.4 321.6 224.0 319.2 227.2 315.6 230.7 312.7 231.4 306.7 232.6 304.9 231.7 304.7 228.6 302.5 223.7 300.7 221.0 300.1 216.4 297.7 211.3 296.9 208.8 297.7 204.5 298.9 201.4 297.7 195.4 297.1 194.2 293.6 189.4 294.1 185.8 294.5 183.4 293.0 182.8 290.0 183.1 288.2 180.7 284.0 181.0 280.4 182.5 277.4 182.0 273.8 182.9 269.1 180.1 266.9 178.0 264.9 175.0 262.7 173.1 262.1 170.4 263.3 165.1 262.5 162.5 265.5 156.0 269.1 153.3 271.1 150.6 271.5 147.1 274.7 145.0zM341.7 202.6 343.1 206.9 341.9 210.1 340.1 215.8 338.9 219.1 336.6 219.7 335.1 215.8 335.7 212.6 335.4 208.8 338.3 207.3 340.1 204.5zM276.1 142.1 275.3 140.9 274.0 140.3 272.1 140.6 272.3 138.0 271.5 136.0 272.3 132.8 271.7 131.2 273.2 130.1 278.0 130.4 281.0 130.5 281.4 127.9 280.2 124.1 277.2 122.1 280.6 121.4 281.2 119.6 283.0 120.0 284.7 118.1 286.6 116.6 288.2 114.3 288.8 112.7 291.2 112.3 293.0 111.7 293.2 108.2 292.6 105.4 295.3 103.4 295.3 106.7 294.7 109.2 295.9 111.3 298.9 110.7 301.9 110.7 304.9 109.8 307.9 108.6 308.1 104.5 311.5 104.5 310.9 101.6 311.5 99.7 316.2 99.3 318.9 98.1 316.8 96.9 310.0 98.1 308.5 95.6 308.5 90.6 312.7 85.1 313.3 83.7 310.3 82.8 307.9 86.5 305.5 89.2 303.7 91.9 303.3 96.1 305.3 98.5 302.5 103.8 301.9 106.7 298.1 108.2 296.5 102.7 295.3 99.3 293.0 102.0 290.0 102.3 288.8 98.1 288.8 93.1 292.4 89.8 295.9 86.5 298.3 80.7 300.7 74.5 304.3 70.1 309.1 68.4 313.9 65.9 316.8 66.6 319.8 69.4 322.2 71.8 325.8 72.8 331.2 76.7 331.8 81.3 324.6 81.3 324.4 86.5 327.6 88.4 331.2 86.2 334.8 81.6 335.4 75.1 337.7 76.1 340.1 77.1 346.1 74.5 348.5 75.1 353.3 74.5 355.1 70.1 361.6 72.8 364.6 75.1 362.2 66.6 364.6 60.1 366.4 56.9 369.4 58.9 369.4 65.9 369.8 73.8 371.2 77.1 372.4 72.8 370.6 64.7 372.4 60.1 377.2 60.5 379.0 56.0 386.5 53.9 386.7 48.5 396.3 44.7 407.0 35.7 416.6 42.2 418.4 56.0 424.9 58.1 434.5 56.0 438.1 65.9 445.2 63.6 450.0 60.1 462.0 64.0 473.9 69.4 476.9 70.8 485.9 69.4 493.0 70.1 497.8 72.8 503.8 77.7 509.7 81.9 506.2 85.1 500.2 85.7 496.0 86.5 495.4 91.9 489.4 95.6 485.9 98.1 479.9 98.1 477.5 102.7 476.3 107.1 473.9 111.3 472.1 113.7 470.0 117.2 469.1 113.3 468.5 106.0 470.3 102.7 473.9 95.6 477.5 91.9 473.9 93.1 467.9 99.3 462.0 99.3 453.6 99.7 450.6 103.8 446.4 110.2 451.2 112.7 450.6 117.2 450.6 121.8 447.6 126.2 444.1 130.4 440.2 131.2 438.1 132.3 437.5 134.7 435.7 137.5 437.2 140.6 437.2 143.2 433.9 144.2 433.5 140.6 432.1 139.1 432.1 136.8 427.7 137.7 427.9 134.7 423.7 137.2 423.5 139.1 424.9 140.3 429.1 140.1 426.1 142.8 425.2 144.2 427.1 147.1 428.4 149.2 428.5 150.9 426.7 153.3 425.5 156.0 423.1 159.2 419.3 160.9 415.4 161.9 414.2 163.4 413.7 161.9 411.7 161.9 410.0 163.4 409.2 165.1 410.6 167.6 412.8 169.7 413.4 173.4 413.0 174.5 410.4 175.8 408.2 177.9 408.0 175.6 405.8 175.0 403.4 172.9 402.2 171.9 401.3 175.8 402.6 178.1 403.8 179.9 405.2 181.0 406.4 182.8 406.4 185.2 407.3 186.5 406.4 186.6 403.8 184.9 402.6 182.0 402.4 180.4 400.2 178.6 400.5 175.0 399.5 168.2 396.6 169.1 395.4 168.8 395.7 165.7 393.3 162.5 392.4 160.6 390.9 161.3 388.5 161.6 386.5 162.5 384.3 164.4 381.1 167.6 378.7 169.5 378.6 172.5 378.1 175.8 375.4 178.5 373.9 176.8 372.1 172.8 370.6 168.8 369.8 165.1 369.5 161.9 367.0 162.8 365.2 160.9 364.4 159.0 362.3 156.8 356.9 157.1 351.5 156.4 350.0 154.4 347.3 155.1 343.7 153.6 342.9 150.6 340.1 150.6 340.7 153.3 342.5 155.4 344.3 156.9 344.1 158.3 347.9 158.3 349.9 156.3 350.0 157.6 352.7 159.3 354.2 160.6 352.7 163.2 351.5 165.3 349.1 167.0 344.9 168.8 341.3 170.7 336.6 172.8 334.5 172.9 333.9 170.1 333.6 167.6 331.5 164.4 329.4 161.9 327.6 158.0 325.6 154.7 324.5 151.3 323.8 153.6 321.7 150.7 321.4 148.9 323.6 148.8 324.6 146.4 325.6 143.5 325.8 140.9 324.0 140.9 321.6 141.9 319.2 141.3 316.2 140.9 314.5 138.3 314.2 136.0 317.4 134.1 320.4 134.1 324.6 132.8 328.2 134.4 332.4 133.6 332.6 132.0 330.6 130.4 327.6 128.2 326.5 127.2 325.2 127.7 322.8 128.7 321.6 127.0 322.8 126.0 320.4 125.1 318.6 127.0 317.2 128.7 316.0 132.0 316.8 133.9 314.5 135.0 311.5 134.7 310.0 135.2 311.2 137.2 310.3 139.1 311.5 139.5 309.7 141.3 308.6 140.6 308.1 138.6 306.1 136.0 306.1 133.1 301.9 130.4 299.0 127.5 297.5 127.4 297.7 129.6 299.5 132.0 301.9 133.6 304.9 135.8 303.1 137.5 302.5 139.1 301.6 139.1 301.9 136.8 301.4 135.8 299.5 134.7 297.7 133.3 295.9 132.0 295.3 129.9 293.3 128.9 291.8 129.9 288.8 130.7 286.6 130.9 286.6 132.8 283.8 134.4 282.4 136.8 283.0 137.8 282.0 139.7 280.2 141.0 277.5 141.0zM378.1 176.4 380.5 179.2 379.8 180.8 378.4 181.0 378.1 178.6zM276.0 118.8 279.2 117.7 284.5 116.8 284.8 113.9 283.2 112.5 282.2 110.2 280.9 107.9 280.2 105.8 280.6 103.6 279.0 101.3 276.8 101.3 275.4 103.8 276.1 106.5 276.9 109.2 279.1 109.4 279.0 111.3 279.3 112.7 277.3 112.7 277.8 114.7 276.6 115.6 278.9 116.4 277.4 117.2zM275.6 114.8 275.4 112.3 276.2 110.0 273.8 108.8 272.6 110.7 270.9 111.3 270.9 115.2 272.6 116.0zM255.9 87.9 254.1 83.7 256.5 81.0 261.3 81.9 265.5 81.0 266.7 84.5 264.9 87.1 260.5 89.5 257.7 88.4zM295.9 31.1 301.9 42.2 307.9 36.8 315.0 21.5 306.7 17.9 295.9 22.8zM344.9 64.0 349.1 67.7 352.1 66.9 350.3 56.0 356.9 47.1 365.2 39.5 359.2 42.2 350.9 47.1 347.3 54.8zM336.6 21.5 352.1 21.5 356.9 14.2 342.5 10.3zM396.3 28.0 408.2 31.1 407.0 17.9 397.5 14.2zM445.2 53.9 457.2 49.4 451.2 44.7 447.6 47.1zM496.0 65.9 500.8 65.1 497.8 63.6zM452.4 126.2 454.2 125.3 453.6 120.0 455.4 120.9 453.6 113.3 453.2 110.7 452.2 113.3 452.4 119.0zM438.1 148.5 439.9 148.7 440.5 145.7 444.1 145.7 446.2 144.5 448.8 144.0 451.0 142.5 451.2 138.8 452.4 136.8 451.7 133.8 450.0 134.7 450.0 136.8 449.4 139.1 447.0 140.6 446.2 140.1 445.2 142.3 441.7 142.8 439.3 144.2 437.7 145.7zM450.0 133.6 451.5 133.1 453.8 132.8 456.6 130.7 454.8 129.2 452.4 127.0 451.8 130.4 450.0 132.0zM426.4 160.1 427.2 161.3 428.4 158.0 427.9 156.9 427.0 158.0zM412.5 164.8 414.8 163.7 415.4 164.3 413.8 166.1zM426.1 168.8 426.9 165.7 428.9 165.7 428.5 167.6 429.1 171.1 430.9 172.5 429.7 171.9 427.9 171.6 426.9 170.9zM428.5 179.8 432.7 176.4 434.0 179.5 432.7 181.4 430.9 180.4zM428.5 175.0 432.7 174.4 431.5 176.4 429.7 176.8zM413.0 186.4 413.7 185.8 415.4 186.3 417.8 184.4 420.8 182.2 422.6 179.8 424.3 181.6 424.9 182.3 423.7 182.8 423.4 187.0 424.9 187.0 423.1 189.4 422.0 191.2 421.4 193.0 419.6 192.4 415.4 191.8 414.2 190.4 413.6 188.2zM396.6 181.5 399.3 182.0 402.6 185.2 406.7 189.4 409.4 191.8 409.3 195.1 407.6 195.3 404.6 193.0 402.6 189.4 400.8 186.2 398.7 184.0zM408.5 196.3 410.0 195.4 412.4 196.2 415.4 196.0 417.3 196.5 419.6 197.4 419.6 198.6 415.4 198.0 411.8 197.5 409.4 196.9zM425.4 194.8 425.5 191.8 424.7 191.2 425.9 188.2 426.7 187.0 431.7 186.4 429.7 187.6 426.7 187.6 427.9 189.4 430.1 189.4 428.3 190.6 429.5 193.6 427.9 193.9 426.7 191.8 426.5 194.8zM430.9 199.6 434.5 198.3 432.7 199.6 430.9 200.4zM420.2 198.1 424.9 198.1 428.5 198.1 428.5 198.9 423.7 199.0 420.2 198.9zM439.3 189.4 442.9 189.2 444.6 192.1 447.6 190.2 451.2 191.3 457.0 193.9 459.0 195.6 459.3 197.8 462.0 200.6 459.6 200.3 457.2 197.8 454.8 197.4 453.0 199.4 451.2 199.0 448.8 197.9 447.6 198.3 447.4 197.2 448.2 196.0 445.2 193.6 442.3 193.0 440.5 191.5 442.0 190.9 439.3 189.8zM418.4 215.1 419.0 220.4 420.2 225.1 421.0 228.6 420.2 231.9 423.1 233.0 426.1 231.4 430.3 231.3 433.3 229.0 436.9 228.0 439.5 227.9 442.9 229.7 444.8 232.6 447.3 229.4 447.4 233.0 448.2 232.6 449.4 234.1 451.2 237.5 454.8 238.1 457.5 238.9 459.6 237.0 462.0 236.6 462.9 232.2 463.8 230.0 465.6 227.2 466.3 223.1 465.6 219.5 462.9 215.8 460.8 213.2 457.5 211.1 456.5 206.3 454.2 205.1 453.0 201.2 451.9 203.6 451.8 206.9 450.6 209.4 449.1 209.2 446.1 207.3 444.6 206.1 446.3 203.0 444.1 202.6 441.2 201.8 439.3 202.9 437.5 206.1 435.7 206.3 433.3 205.1 430.9 207.9 428.8 210.1 427.3 212.1 424.3 213.0 422.2 213.4 419.6 214.9zM455.6 241.5 459.9 241.8 459.6 245.5 457.2 246.2 456.2 243.9zM489.1 232.0 491.2 233.6 492.4 235.8 496.0 236.9 494.2 239.3 493.0 242.5 491.8 242.6 491.4 240.1 490.4 239.2 491.4 236.6zM489.1 241.2 491.0 242.5 490.4 244.4 489.2 246.5 487.3 247.7 486.7 250.1 484.7 251.3 481.7 250.2 482.3 248.2 484.2 246.5 486.5 244.7 488.2 242.0zM193.2 314.3 201.6 300.3 208.7 292.7 213.5 290.7 212.3 294.2 209.9 298.7 208.7 307.0 211.1 327.0 193.2 354.9zM270.9 310.5 282.8 307.0 294.7 307.0 306.7 307.0 318.6 306.3 330.6 302.9 342.5 297.2 348.5 295.7 354.5 298.7 366.4 301.9 372.4 305.2 378.4 298.7 390.3 295.7 402.2 294.2 414.2 294.2 426.1 296.6 438.1 295.1 450.0 296.6 462.0 301.9 473.9 307.0 479.9 309.8 485.9 312.4 485.9 402.5 270.9 402.5zM297.6 138.9 301.4 138.6 300.8 141.0 297.7 139.7zM292.6 134.4 294.5 134.4 294.3 137.5 293.0 137.5zM293.1 131.4 294.1 131.4 294.0 133.8 293.3 133.5zM310.9 142.8 314.2 143.1 312.1 143.7zM321.4 143.5 324.1 142.6 322.8 144.1z" fill="#f1f0eb"/><path d="M339.5 127.0 341.6 125.3 344.3 124.4 346.1 127.0 343.7 128.7 344.1 131.2 345.9 133.1 346.1 136.0 347.3 138.3 346.7 140.6 343.7 141.0 341.3 139.8 341.9 135.7 340.1 132.8 339.5 131.2 338.9 128.7zM172.9 125.0 177.7 121.2 181.5 124.4 178.3 125.3zM177.9 132.8 178.9 126.2 181.3 126.5 179.7 131.2zM181.9 130.4 182.5 126.2 187.2 127.0 184.9 131.2zM187.5 130.7 192.0 130.4 191.7 129.2 187.8 130.1zM183.2 133.3 188.6 131.4 187.2 131.7 184.3 132.5zM164.6 117.2 166.9 111.3 167.5 116.2zM133.5 83.7 139.5 79.8 141.9 83.7 137.1 85.7zM143.1 95.6 150.8 91.9 150.2 93.1 145.4 94.9z" fill="#aac6f0"/></g>
<g transform="translate(430 0)"><path d="M82.1 83.4 84.5 75.1 89.3 68.4 95.9 64.7 101.2 66.6 109.6 69.1 114.4 70.8 122.7 73.2 132.3 76.1 141.9 77.7 151.4 76.7 161.0 75.8 166.9 77.7 171.7 74.5 177.7 77.7 182.5 80.7 184.9 76.1 181.3 71.2 186.1 79.2 180.1 85.1 177.7 87.9 171.1 94.4 169.9 100.9 172.9 104.9 177.1 106.5 181.3 108.6 184.5 109.2 184.6 113.5 187.2 116.6 188.4 115.2 188.7 110.2 190.8 107.1 191.1 102.7 189.6 99.3 190.2 94.4 194.4 92.4 198.0 94.4 199.8 100.4 202.8 101.6 205.8 97.4 208.7 103.8 210.5 108.2 214.7 114.7 212.3 118.1 206.4 118.7 202.8 120.3 205.8 121.2 205.4 124.4 209.9 126.5 211.1 125.8 207.0 129.1 204.0 129.9 202.8 128.2 199.2 130.1 198.6 133.3 194.4 135.2 194.4 137.5 192.6 139.1 192.0 140.9 192.6 143.1 190.2 144.2 188.4 146.1 186.1 148.1 185.7 150.6 187.2 155.0 186.6 157.1 185.1 155.4 183.9 153.3 183.1 150.9 180.7 150.9 177.7 149.9 175.9 151.7 173.5 151.3 170.5 151.2 166.9 153.6 166.3 157.3 166.0 160.6 167.5 164.4 169.9 166.1 173.5 165.7 174.7 162.5 178.3 161.9 178.3 165.7 177.3 168.8 180.1 169.0 183.3 170.1 182.8 174.4 184.9 177.4 187.8 176.7 190.5 178.0 189.6 179.2 186.6 179.5 183.7 178.3 180.3 176.2 180.1 174.6 178.3 172.5 174.1 171.4 170.5 168.8 166.9 169.1 163.4 167.6 159.2 166.0 156.8 163.8 156.8 160.6 153.8 157.1 150.2 152.7 148.1 148.8 145.7 148.2 147.8 152.0 149.6 156.0 151.4 160.0 149.0 157.6 146.4 153.3 144.2 149.9 142.8 146.8 141.3 145.0 138.8 144.1 136.5 139.8 134.9 136.8 134.3 132.8 134.7 126.2 133.9 122.0 135.9 122.1 132.9 118.5 129.9 115.2 126.9 110.2 123.9 104.9 120.4 101.6 116.2 98.5 112.0 98.1 107.8 96.1 103.6 100.0 101.2 98.1 98.9 103.2 94.7 106.0 89.3 109.2 86.0 110.4 91.7 106.0 94.7 101.6 89.9 101.1 86.3 96.9 85.1 93.1 86.3 90.0 90.5 86.5 87.5 86.2 83.9 85.7zM194.7 29.9 204.0 17.9 207.6 7.0 231.0 2.6 255.6 3.5 266.1 10.3 260.2 20.8 256.8 35.2 258.0 46.6 253.2 60.9 253.8 70.1 245.1 79.5 236.8 81.9 233.8 86.5 229.8 93.6 226.1 87.9 222.8 81.9 219.3 70.1 214.6 52.6 207.6 43.2 199.3 38.5zM175.9 56.0 184.3 54.8 192.7 61.7 201.1 73.2 206.7 81.3 205.2 89.2 201.1 89.8 192.7 84.3 187.1 75.8 180.1 67.3zM167.4 14.2 175.9 4.4 201.1 2.6 206.7 5.3 201.1 17.9 192.7 28.0 187.1 36.3 184.3 42.2 178.6 39.5 173.0 32.3 167.4 24.2zM135.2 40.6 142.1 36.3 156.2 28.0 166.0 32.3 173.0 39.5 184.3 46.1 184.3 50.4 173.0 50.4 160.4 47.6 149.1 49.0 139.3 47.6zM132.3 56.0 137.9 52.2 146.4 54.8 156.2 58.9 158.9 65.9 153.3 73.2 142.1 70.1 135.2 64.7zM186.1 87.9 180.1 87.9 178.9 83.7 182.5 81.3 185.5 85.1zM160.4 54.8 167.4 53.5 170.3 60.5 167.4 70.1 161.8 67.3zM212.0 123.4 215.9 119.4 216.5 116.0 219.5 120.0 219.9 123.6 218.9 125.1 215.9 123.4zM181.3 161.4 184.9 159.8 190.2 161.5 194.2 163.6 190.2 163.9 187.2 161.5 183.1 161.4zM193.8 165.7 195.8 163.9 199.8 164.3 201.1 165.6 198.0 166.1 194.2 166.1zM135.3 122.0 129.6 117.5 133.1 118.3zM190.5 178.0 192.0 176.8 192.6 175.2 195.2 174.6 197.0 173.3 197.8 174.4 197.4 175.6 199.2 173.8 201.6 175.6 206.4 175.5 209.0 175.3 210.5 178.0 213.5 180.1 217.1 181.0 220.7 182.2 222.5 185.8 223.1 188.2 225.5 189.4 229.6 191.2 235.0 191.5 238.6 193.9 240.8 194.8 241.2 197.2 240.4 199.6 238.4 202.0 236.5 204.5 236.2 209.4 234.4 213.2 232.6 216.4 229.3 216.8 225.5 219.7 224.6 223.7 222.5 227.2 220.1 230.7 218.3 232.6 215.3 232.6 212.9 231.4 214.5 234.8 214.1 237.6 208.7 238.9 208.1 241.5 205.2 242.0 205.8 244.4 204.6 248.5 202.2 251.1 204.0 252.8 201.0 258.3 200.4 261.7 201.0 263.7 203.4 267.2 199.2 267.8 196.8 265.1 193.8 262.1 192.6 255.5 193.8 251.1 194.4 246.0 195.0 242.8 195.0 236.6 196.8 231.4 197.4 226.5 198.0 221.7 198.8 217.1 199.0 210.7 196.2 208.6 192.0 205.1 190.2 202.0 187.8 197.2 185.8 194.8 186.9 192.4 186.6 190.0 187.2 187.6 188.4 186.2 189.6 184.6 190.2 182.8 190.5 180.4 189.8 179.2zM209.6 259.8 213.5 259.2 213.8 261.2 210.5 261.6zM275.8 142.3 280.4 143.4 284.0 141.3 288.8 140.9 294.5 140.1 295.9 140.7 295.0 143.5 295.9 145.7 300.7 147.4 305.5 150.2 306.7 149.2 306.7 147.4 310.3 147.1 312.7 148.1 317.4 149.5 321.0 148.9 321.7 150.7 322.8 154.7 325.2 158.7 327.2 162.5 328.8 166.3 330.0 169.5 332.4 171.9 334.5 173.8 336.0 175.7 344.0 174.0 343.7 175.6 342.5 179.2 340.1 182.8 337.7 185.8 334.2 188.8 331.2 191.2 329.7 194.2 330.0 197.8 331.2 200.8 331.3 206.3 327.0 210.1 325.2 213.9 325.2 217.7 322.0 220.4 321.6 224.0 319.2 227.2 315.6 230.7 312.7 231.4 306.7 232.6 304.9 231.7 304.7 228.6 302.5 223.7 300.7 221.0 300.1 216.4 297.7 211.3 296.9 208.8 297.7 204.5 298.9 201.4 297.7 195.4 297.1 194.2 293.6 189.4 294.1 185.8 294.5 183.4 293.0 182.8 290.0 183.1 288.2 180.7 284.0 181.0 280.4 182.5 277.4 182.0 273.8 182.9 269.1 180.1 266.9 178.0 264.9 175.0 262.7 173.1 262.1 170.4 263.3 165.1 262.5 162.5 265.5 156.0 269.1 153.3 271.1 150.6 271.5 147.1 274.7 145.0zM341.7 202.6 343.1 206.9 341.9 210.1 340.1 215.8 338.9 219.1 336.6 219.7 335.1 215.8 335.7 212.6 335.4 208.8 338.3 207.3 340.1 204.5zM276.1 142.1 275.3 140.9 274.0 140.3 272.1 140.6 272.3 138.0 271.5 136.0 272.3 132.8 271.7 131.2 273.2 130.1 278.0 130.4 281.0 130.5 281.4 127.9 280.2 124.1 277.2 122.1 280.6 121.4 281.2 119.6 283.0 120.0 284.7 118.1 286.6 116.6 288.2 114.3 288.8 112.7 291.2 112.3 293.0 111.7 293.2 108.2 292.6 105.4 295.3 103.4 295.3 106.7 294.7 109.2 295.9 111.3 298.9 110.7 301.9 110.7 304.9 109.8 307.9 108.6 308.1 104.5 311.5 104.5 310.9 101.6 311.5 99.7 316.2 99.3 318.9 98.1 316.8 96.9 310.0 98.1 308.5 95.6 308.5 90.6 312.7 85.1 313.3 83.7 310.3 82.8 307.9 86.5 305.5 89.2 303.7 91.9 303.3 96.1 305.3 98.5 302.5 103.8 301.9 106.7 298.1 108.2 296.5 102.7 295.3 99.3 293.0 102.0 290.0 102.3 288.8 98.1 288.8 93.1 292.4 89.8 295.9 86.5 298.3 80.7 300.7 74.5 304.3 70.1 309.1 68.4 313.9 65.9 316.8 66.6 319.8 69.4 322.2 71.8 325.8 72.8 331.2 76.7 331.8 81.3 324.6 81.3 324.4 86.5 327.6 88.4 331.2 86.2 334.8 81.6 335.4 75.1 337.7 76.1 340.1 77.1 346.1 74.5 348.5 75.1 353.3 74.5 355.1 70.1 361.6 72.8 364.6 75.1 362.2 66.6 364.6 60.1 366.4 56.9 369.4 58.9 369.4 65.9 369.8 73.8 371.2 77.1 372.4 72.8 370.6 64.7 372.4 60.1 377.2 60.5 379.0 56.0 386.5 53.9 386.7 48.5 396.3 44.7 407.0 35.7 416.6 42.2 418.4 56.0 424.9 58.1 434.5 56.0 438.1 65.9 445.2 63.6 450.0 60.1 462.0 64.0 473.9 69.4 476.9 70.8 485.9 69.4 493.0 70.1 497.8 72.8 503.8 77.7 509.7 81.9 506.2 85.1 500.2 85.7 496.0 86.5 495.4 91.9 489.4 95.6 485.9 98.1 479.9 98.1 477.5 102.7 476.3 107.1 473.9 111.3 472.1 113.7 470.0 117.2 469.1 113.3 468.5 106.0 470.3 102.7 473.9 95.6 477.5 91.9 473.9 93.1 467.9 99.3 462.0 99.3 453.6 99.7 450.6 103.8 446.4 110.2 451.2 112.7 450.6 117.2 450.6 121.8 447.6 126.2 444.1 130.4 440.2 131.2 438.1 132.3 437.5 134.7 435.7 137.5 437.2 140.6 437.2 143.2 433.9 144.2 433.5 140.6 432.1 139.1 432.1 136.8 427.7 137.7 427.9 134.7 423.7 137.2 423.5 139.1 424.9 140.3 429.1 140.1 426.1 142.8 425.2 144.2 427.1 147.1 428.4 149.2 428.5 150.9 426.7 153.3 425.5 156.0 423.1 159.2 419.3 160.9 415.4 161.9 414.2 163.4 413.7 161.9 411.7 161.9 410.0 163.4 409.2 165.1 410.6 167.6 412.8 169.7 413.4 173.4 413.0 174.5 410.4 175.8 408.2 177.9 408.0 175.6 405.8 175.0 403.4 172.9 402.2 171.9 401.3 175.8 402.6 178.1 403.8 179.9 405.2 181.0 406.4 182.8 406.4 185.2 407.3 186.5 406.4 186.6 403.8 184.9 402.6 182.0 402.4 180.4 400.2 178.6 400.5 175.0 399.5 168.2 396.6 169.1 395.4 168.8 395.7 165.7 393.3 162.5 392.4 160.6 390.9 161.3 388.5 161.6 386.5 162.5 384.3 164.4 381.1 167.6 378.7 169.5 378.6 172.5 378.1 175.8 375.4 178.5 373.9 176.8 372.1 172.8 370.6 168.8 369.8 165.1 369.5 161.9 367.0 162.8 365.2 160.9 364.4 159.0 362.3 156.8 356.9 157.1 351.5 156.4 350.0 154.4 347.3 155.1 343.7 153.6 342.9 150.6 340.1 150.6 340.7 153.3 342.5 155.4 344.3 156.9 344.1 158.3 347.9 158.3 349.9 156.3 350.0 157.6 352.7 159.3 354.2 160.6 352.7 163.2 351.5 165.3 349.1 167.0 344.9 168.8 341.3 170.7 336.6 172.8 334.5 172.9 333.9 170.1 333.6 167.6 331.5 164.4 329.4 161.9 327.6 158.0 325.6 154.7 324.5 151.3 323.8 153.6 321.7 150.7 321.4 148.9 323.6 148.8 324.6 146.4 325.6 143.5 325.8 140.9 324.0 140.9 321.6 141.9 319.2 141.3 316.2 140.9 314.5 138.3 314.2 136.0 317.4 134.1 320.4 134.1 324.6 132.8 328.2 134.4 332.4 133.6 332.6 132.0 330.6 130.4 327.6 128.2 326.5 127.2 325.2 127.7 322.8 128.7 321.6 127.0 322.8 126.0 320.4 125.1 318.6 127.0 317.2 128.7 316.0 132.0 316.8 133.9 314.5 135.0 311.5 134.7 310.0 135.2 311.2 137.2 310.3 139.1 311.5 139.5 309.7 141.3 308.6 140.6 308.1 138.6 306.1 136.0 306.1 133.1 301.9 130.4 299.0 127.5 297.5 127.4 297.7 129.6 299.5 132.0 301.9 133.6 304.9 135.8 303.1 137.5 302.5 139.1 301.6 139.1 301.9 136.8 301.4 135.8 299.5 134.7 297.7 133.3 295.9 132.0 295.3 129.9 293.3 128.9 291.8 129.9 288.8 130.7 286.6 130.9 286.6 132.8 283.8 134.4 282.4 136.8 283.0 137.8 282.0 139.7 280.2 141.0 277.5 141.0zM378.1 176.4 380.5 179.2 379.8 180.8 378.4 181.0 378.1 178.6zM276.0 118.8 279.2 117.7 284.5 116.8 284.8 113.9 283.2 112.5 282.2 110.2 280.9 107.9 280.2 105.8 280.6 103.6 279.0 101.3 276.8 101.3 275.4 103.8 276.1 106.5 276.9 109.2 279.1 109.4 279.0 111.3 279.3 112.7 277.3 112.7 277.8 114.7 276.6 115.6 278.9 116.4 277.4 117.2zM275.6 114.8 275.4 112.3 276.2 110.0 273.8 108.8 272.6 110.7 270.9 111.3 270.9 115.2 272.6 116.0zM255.9 87.9 254.1 83.7 256.5 81.0 261.3 81.9 265.5 81.0 266.7 84.5 264.9 87.1 260.5 89.5 257.7 88.4zM295.9 31.1 301.9 42.2 307.9 36.8 315.0 21.5 306.7 17.9 295.9 22.8zM344.9 64.0 349.1 67.7 352.1 66.9 350.3 56.0 356.9 47.1 365.2 39.5 359.2 42.2 350.9 47.1 347.3 54.8zM336.6 21.5 352.1 21.5 356.9 14.2 342.5 10.3zM396.3 28.0 408.2 31.1 407.0 17.9 397.5 14.2zM445.2 53.9 457.2 49.4 451.2 44.7 447.6 47.1zM496.0 65.9 500.8 65.1 497.8 63.6zM452.4 126.2 454.2 125.3 453.6 120.0 455.4 120.9 453.6 113.3 453.2 110.7 452.2 113.3 452.4 119.0zM438.1 148.5 439.9 148.7 440.5 145.7 444.1 145.7 446.2 144.5 448.8 144.0 451.0 142.5 451.2 138.8 452.4 136.8 451.7 133.8 450.0 134.7 450.0 136.8 449.4 139.1 447.0 140.6 446.2 140.1 445.2 142.3 441.7 142.8 439.3 144.2 437.7 145.7zM450.0 133.6 451.5 133.1 453.8 132.8 456.6 130.7 454.8 129.2 452.4 127.0 451.8 130.4 450.0 132.0zM426.4 160.1 427.2 161.3 428.4 158.0 427.9 156.9 427.0 158.0zM412.5 164.8 414.8 163.7 415.4 164.3 413.8 166.1zM426.1 168.8 426.9 165.7 428.9 165.7 428.5 167.6 429.1 171.1 430.9 172.5 429.7 171.9 427.9 171.6 426.9 170.9zM428.5 179.8 432.7 176.4 434.0 179.5 432.7 181.4 430.9 180.4zM428.5 175.0 432.7 174.4 431.5 176.4 429.7 176.8zM413.0 186.4 413.7 185.8 415.4 186.3 417.8 184.4 420.8 182.2 422.6 179.8 424.3 181.6 424.9 182.3 423.7 182.8 423.4 187.0 424.9 187.0 423.1 189.4 422.0 191.2 421.4 193.0 419.6 192.4 415.4 191.8 414.2 190.4 413.6 188.2zM396.6 181.5 399.3 182.0 402.6 185.2 406.7 189.4 409.4 191.8 409.3 195.1 407.6 195.3 404.6 193.0 402.6 189.4 400.8 186.2 398.7 184.0zM408.5 196.3 410.0 195.4 412.4 196.2 415.4 196.0 417.3 196.5 419.6 197.4 419.6 198.6 415.4 198.0 411.8 197.5 409.4 196.9zM425.4 194.8 425.5 191.8 424.7 191.2 425.9 188.2 426.7 187.0 431.7 186.4 429.7 187.6 426.7 187.6 427.9 189.4 430.1 189.4 428.3 190.6 429.5 193.6 427.9 193.9 426.7 191.8 426.5 194.8zM430.9 199.6 434.5 198.3 432.7 199.6 430.9 200.4zM420.2 198.1 424.9 198.1 428.5 198.1 428.5 198.9 423.7 199.0 420.2 198.9zM439.3 189.4 442.9 189.2 444.6 192.1 447.6 190.2 451.2 191.3 457.0 193.9 459.0 195.6 459.3 197.8 462.0 200.6 459.6 200.3 457.2 197.8 454.8 197.4 453.0 199.4 451.2 199.0 448.8 197.9 447.6 198.3 447.4 197.2 448.2 196.0 445.2 193.6 442.3 193.0 440.5 191.5 442.0 190.9 439.3 189.8zM418.4 215.1 419.0 220.4 420.2 225.1 421.0 228.6 420.2 231.9 423.1 233.0 426.1 231.4 430.3 231.3 433.3 229.0 436.9 228.0 439.5 227.9 442.9 229.7 444.8 232.6 447.3 229.4 447.4 233.0 448.2 232.6 449.4 234.1 451.2 237.5 454.8 238.1 457.5 238.9 459.6 237.0 462.0 236.6 462.9 232.2 463.8 230.0 465.6 227.2 466.3 223.1 465.6 219.5 462.9 215.8 460.8 213.2 457.5 211.1 456.5 206.3 454.2 205.1 453.0 201.2 451.9 203.6 451.8 206.9 450.6 209.4 449.1 209.2 446.1 207.3 444.6 206.1 446.3 203.0 444.1 202.6 441.2 201.8 439.3 202.9 437.5 206.1 435.7 206.3 433.3 205.1 430.9 207.9 428.8 210.1 427.3 212.1 424.3 213.0 422.2 213.4 419.6 214.9zM455.6 241.5 459.9 241.8 459.6 245.5 457.2 246.2 456.2 243.9zM489.1 232.0 491.2 233.6 492.4 235.8 496.0 236.9 494.2 239.3 493.0 242.5 491.8 242.6 491.4 240.1 490.4 239.2 491.4 236.6zM489.1 241.2 491.0 242.5 490.4 244.4 489.2 246.5 487.3 247.7 486.7 250.1 484.7 251.3 481.7 250.2 482.3 248.2 484.2 246.5 486.5 244.7 488.2 242.0zM193.2 314.3 201.6 300.3 208.7 292.7 213.5 290.7 212.3 294.2 209.9 298.7 208.7 307.0 211.1 327.0 193.2 354.9zM270.9 310.5 282.8 307.0 294.7 307.0 306.7 307.0 318.6 306.3 330.6 302.9 342.5 297.2 348.5 295.7 354.5 298.7 366.4 301.9 372.4 305.2 378.4 298.7 390.3 295.7 402.2 294.2 414.2 294.2 426.1 296.6 438.1 295.1 450.0 296.6 462.0 301.9 473.9 307.0 479.9 309.8 485.9 312.4 485.9 402.5 270.9 402.5zM297.6 138.9 301.4 138.6 300.8 141.0 297.7 139.7zM292.6 134.4 294.5 134.4 294.3 137.5 293.0 137.5zM293.1 131.4 294.1 131.4 294.0 133.8 293.3 133.5zM310.9 142.8 314.2 143.1 312.1 143.7zM321.4 143.5 324.1 142.6 322.8 144.1z" fill="#f1f0eb"/><path d="M339.5 127.0 341.6 125.3 344.3 124.4 346.1 127.0 343.7 128.7 344.1 131.2 345.9 133.1 346.1 136.0 347.3 138.3 346.7 140.6 343.7 141.0 341.3 139.8 341.9 135.7 340.1 132.8 339.5 131.2 338.9 128.7zM172.9 125.0 177.7 121.2 181.5 124.4 178.3 125.3zM177.9 132.8 178.9 126.2 181.3 126.5 179.7 131.2zM181.9 130.4 182.5 126.2 187.2 127.0 184.9 131.2zM187.5 130.7 192.0 130.4 191.7 129.2 187.8 130.1zM183.2 133.3 188.6 131.4 187.2 131.7 184.3 132.5zM164.6 117.2 166.9 111.3 167.5 116.2zM133.5 83.7 139.5 79.8 141.9 83.7 137.1 85.7zM143.1 95.6 150.8 91.9 150.2 93.1 145.4 94.9z" fill="#aac6f0"/></g>
</svg>

<svg class="a" style="left:320px;top:94px" width="820" height="300" viewBox="320 94 820 300"><text x="441.7" y="209.2" font-family="Liberation Sans" font-size="9.5" font-weight="700" fill="#2b2b2b" textLength="80.5" lengthAdjust="spacingAndGlyphs" stroke="#f4f3ef" stroke-width="2" paint-order="stroke" stroke-linejoin="round">NORTH AMERICA</text><text x="611.4" y="214.2" font-family="Liberation Sans" font-size="9.5" font-weight="700" fill="#2b2b2b" textLength="37.0" lengthAdjust="spacingAndGlyphs" stroke="#f4f3ef" stroke-width="2" paint-order="stroke" stroke-linejoin="round">EUROPE</text><text x="614.5" y="278" font-family="Liberation Sans" font-size="9.5" font-weight="700" fill="#2b2b2b" textLength="35.0" lengthAdjust="spacingAndGlyphs" stroke="#f4f3ef" stroke-width="2" paint-order="stroke" stroke-linejoin="round">AFRICA</text><text x="500.6" y="304.7" font-family="Liberation Sans" font-size="9.5" font-weight="700" fill="#2b2b2b" textLength="79.8" lengthAdjust="spacingAndGlyphs" stroke="#f4f3ef" stroke-width="2" paint-order="stroke" stroke-linejoin="round">SOUTH AMERICA</text><text x="313" y="311.4" font-family="Liberation Sans" font-size="9.5" font-weight="700" fill="#2b2b2b" textLength="53.0" lengthAdjust="spacingAndGlyphs" stroke="#f4f3ef" stroke-width="2" paint-order="stroke" stroke-linejoin="round">AUSTRALIA</text><text x="387.8" y="240.2" font-family="Liberation Sans" font-size="9" font-weight="400" fill="#5478b4" textLength="31.6" lengthAdjust="spacingAndGlyphs">Pacific</text><text x="389.2" y="250.7" font-family="Liberation Sans" font-size="9" font-weight="400" fill="#5478b4" textLength="29.2" lengthAdjust="spacingAndGlyphs">Ocean</text><text x="532.8" y="242.1" font-family="Liberation Sans" font-size="9" font-weight="400" fill="#5478b4" textLength="37.7" lengthAdjust="spacingAndGlyphs">Atlantic</text><text x="537.3" y="252.1" font-family="Liberation Sans" font-size="9" font-weight="400" fill="#5478b4" textLength="29.0" lengthAdjust="spacingAndGlyphs">Ocean</text><text x="681.9" y="306.6" font-family="Liberation Sans" font-size="9" font-weight="400" fill="#5478b4" textLength="29.9" lengthAdjust="spacingAndGlyphs">Indian</text><text x="681.9" y="316.5" font-family="Liberation Sans" font-size="9" font-weight="400" fill="#5478b4" textLength="29.2" lengthAdjust="spacingAndGlyphs">Ocean</text><text x="871.7" y="209.2" font-family="Liberation Sans" font-size="9.5" font-weight="700" fill="#2b2b2b" textLength="80.5" lengthAdjust="spacingAndGlyphs" stroke="#f4f3ef" stroke-width="2" paint-order="stroke" stroke-linejoin="round">NORTH AMERICA</text><text x="1041.4" y="214.2" font-family="Liberation Sans" font-size="9.5" font-weight="700" fill="#2b2b2b" textLength="37.0" lengthAdjust="spacingAndGlyphs" stroke="#f4f3ef" stroke-width="2" paint-order="stroke" stroke-linejoin="round">EUROPE</text><text x="1044.5" y="278" font-family="Liberation Sans" font-size="9.5" font-weight="700" fill="#2b2b2b" textLength="35.0" lengthAdjust="spacingAndGlyphs" stroke="#f4f3ef" stroke-width="2" paint-order="stroke" stroke-linejoin="round">AFRICA</text><text x="930.6" y="304.7" font-family="Liberation Sans" font-size="9.5" font-weight="700" fill="#2b2b2b" textLength="79.8" lengthAdjust="spacingAndGlyphs" stroke="#f4f3ef" stroke-width="2" paint-order="stroke" stroke-linejoin="round">SOUTH AMERICA</text><text x="743" y="311.4" font-family="Liberation Sans" font-size="9.5" font-weight="700" fill="#2b2b2b" textLength="53.0" lengthAdjust="spacingAndGlyphs" stroke="#f4f3ef" stroke-width="2" paint-order="stroke" stroke-linejoin="round">AUSTRALIA</text><text x="817.8" y="240.2" font-family="Liberation Sans" font-size="9" font-weight="400" fill="#5478b4" textLength="31.6" lengthAdjust="spacingAndGlyphs">Pacific</text><text x="819.2" y="250.7" font-family="Liberation Sans" font-size="9" font-weight="400" fill="#5478b4" textLength="29.2" lengthAdjust="spacingAndGlyphs">Ocean</text><text x="962.8" y="242.1" font-family="Liberation Sans" font-size="9" font-weight="400" fill="#5478b4" textLength="37.7" lengthAdjust="spacingAndGlyphs">Atlantic</text><text x="967.3" y="252.1" font-family="Liberation Sans" font-size="9" font-weight="400" fill="#5478b4" textLength="29.0" lengthAdjust="spacingAndGlyphs">Ocean</text><text x="1111.9" y="306.6" font-family="Liberation Sans" font-size="9" font-weight="400" fill="#5478b4" textLength="29.9" lengthAdjust="spacingAndGlyphs">Indian</text><text x="1111.9" y="316.5" font-family="Liberation Sans" font-size="9" font-weight="400" fill="#5478b4" textLength="29.2" lengthAdjust="spacingAndGlyphs">Ocean</text><text x="714.8" y="205.1" font-family="Liberation Sans" font-size="9.5" font-weight="700" fill="#2b2b2b" textLength="21.5" lengthAdjust="spacingAndGlyphs" stroke="#f4f3ef" stroke-width="2" paint-order="stroke" stroke-linejoin="round">ASIA</text><text x="819.6" y="112.9" font-family="Liberation Sans" font-size="9" font-weight="400" fill="#5478b4" textLength="29.9" lengthAdjust="spacingAndGlyphs">Arctic</text><text x="819.6" y="123.4" font-family="Liberation Sans" font-size="9" font-weight="400" fill="#5478b4" textLength="29.9" lengthAdjust="spacingAndGlyphs">Ocean</text></svg>
<!-- map overlays -->
<div class="a" style="left:322px;top:98px;width:178.5px;height:26px;border-radius:3px;background:#e3dcdc"></div>
<svg class="a" style="left:320px;top:95px" width="40" height="30" viewBox="320 95 40 30">
 <path d="M328.1 116.8V108C328.1 105.8 329.5 104.3 331.5 104.3H347.5C349.5 104.3 350.9 105.8 350.9 108V116.8Z" fill="#003366"/>
 <rect x="330.2" y="105.5" width="3.7" height="10.2" rx="1.5" fill="#e3dcdc"/>
 <rect x="332.1" y="100.1" width="3.9" height="2.5" rx="0.5" fill="#003366"/><rect x="332.1" y="100.1" width="0.9" height="4.5" fill="#003366"/>
 <rect x="340" y="116.8" width="2" height="5.1" fill="#3a5f8c"/>
</svg>
<div class="a" style="left:320px;top:127px;width:180px;height:50px;border:1px solid #8a8a8a;background:rgba(255,255,255,0.55)"></div>

<!-- pin -->
<svg class="a" style="left:710px;top:200px" width="45" height="46" viewBox="710 200 45 46">
 <defs><linearGradient id="sh" x1="0" y1="0" x2="1" y2="0"><stop offset="0" stop-color="#555"/><stop offset="1" stop-color="#bbb" stop-opacity="0.4"/></linearGradient>
 <radialGradient id="ob" cx="0.5" cy="0.35" r="0.6"><stop offset="0" stop-color="#f08a3c"/><stop offset="0.6" stop-color="#e4680f"/><stop offset="1" stop-color="#e77d2e"/></radialGradient></defs>
 <path d="M736 236 L745 224 C752 220 752 210 744 207 L735 206 Z" fill="url(#sh)" opacity="0.8"/>
 <path d="M729.6 242.7 L724 229 C718 225 716.8 220 716.8 216.4 A12.9 12.9 0 0 1 742.6 216.4 C742.6 220 741 225 735.5 229 Z" fill="#fff" stroke="#333" stroke-width="1.1"/>
 <circle cx="729.6" cy="216.4" r="10.5" fill="url(#ob)"/>
 <ellipse cx="729.6" cy="210" rx="5" ry="2" fill="#fff" opacity="0.35"/>
</svg>

<!-- map controls -->
<div class="a" style="left:1015px;top:103px;width:73px;height:24px;border-radius:11px;background:rgba(60,70,90,0.35);filter:blur(1.5px)"></div>
<div class="a" style="left:1014px;top:101.2px;width:72px;height:23.8px;border-radius:11px;background:linear-gradient(#eeeeee,#d9d9d9)"></div>
<div class="a" style="left:1091.5px;top:105.5px;width:19px;height:19px;border-radius:50%;background:rgba(60,70,90,0.4);filter:blur(1.2px)"></div>
<div class="a" style="left:1114px;top:105.5px;width:19px;height:19px;border-radius:50%;background:rgba(60,70,90,0.4);filter:blur(1.2px)"></div>
<svg class="a" style="left:1088px;top:101px" width="46" height="24" viewBox="1088 101 46 24">
 <circle cx="1099.7" cy="112.9" r="9" fill="#dedede"/><circle cx="1122.2" cy="112.9" r="9" fill="#dedede"/>
 <path d="M1095.5 112.9H1103.9M1099.7 108.7V117.1M1118 112.9H1126.4" stroke="#5a5a5a" stroke-width="2.3"/>
</svg>

<!-- scale + copyright -->
<div class="a" style="left:896px;top:358.3px;width:238.5px;height:7px;background:#45bdf2;border:1px solid #3c4550;box-shadow:0 0 0 1px rgba(255,255,255,0.85)"></div>
<svg class="a" style="left:330px;top:358px" width="55" height="24" viewBox="330 358 55 24">
 <path d="M333.6 361V376L340.5 379L348.3 374.5V370.5L341 366.8L338.8 367.8L341.5 372L337.2 374.2V362.2Z" fill="#e9edf6" stroke="#8a98ad" stroke-width="0.6"/>
 
</svg>

<div class="a" style="left:327px;top:407px;width:72px;height:101px;border:3px solid #231f20;background:#fff"></div>
<svg class="a" style="left:339.1px;top:433.9px" width="48.8" height="47.9" viewBox="0 0 49 48" preserveAspectRatio="none"><path fill="#231f20" fill-rule="evenodd" d="M0 0H49V48H0Z M4 4.3V27.6L12.9 33.8L25.5 21.2L44.6 39.9V4.3Z"/><circle cx="12.6" cy="12.3" r="3.7" fill="#231f20"/><path fill="#231f20" d="M28.6 16.8C27.2 16.8 26.4 15.8 26.4 14.6C26.4 13.3 27.4 12.3 28.7 12.3C28.9 10.4 30.3 9.2 32 9.3C32.8 7.3 34.4 6.1 36.2 6.2C38.6 6.4 40 8.4 39.7 10.9C40.3 11.5 40.6 12.4 40.6 13.4C40.6 15.3 39.4 16.8 37.6 16.8Z"/></svg>
<div class="a" style="left:1075px;top:396px;width:57px;height:24px;border-radius:12px;background:#a6a7a9"></div>
<div class="a" style="left:1075px;top:396.5px;width:23px;height:23px;border-radius:50%;background:#fff;border:1px solid #9c9c9c"></div>
<svg class="a" style="left:1075px;top:396px" width="24" height="24"><path d="M7.8 7.2 A7.5 7.5 0 0 0 7.8 18.4" fill="none" stroke="#8c8c8c" stroke-width="1.1"/></svg>
<div class="a inp" style="left:427px;top:435px;width:706px;height:74px"></div>

<div class="a inp" style="left:320px;top:547px;width:820px;height:26px"></div>
<svg class="a" style="left:1122px;top:556px" width="14" height="9"><path d="M1.3 1.5h11.4L7 8z" fill="#003366"/></svg>

<div class="a inp" style="left:327px;top:632px;width:806px;height:26px"></div>
<svg class="a" style="left:1115px;top:641px" width="14" height="9"><path d="M1.3 1.5h11.4L7 8z" fill="#003366"/></svg>
<div class="a" style="left:327px;top:684px;width:806px;height:22px;border:1px solid #c6c7cc;background:#fff"></div>
<div class="a" style="left:330px;top:687px;width:783px;height:15px;background-color:#fff;background-image:linear-gradient(45deg,#d3d3d3 25%,transparent 25%,transparent 75%,#d3d3d3 75%),linear-gradient(45deg,#d3d3d3 25%,transparent 25%,transparent 75%,#d3d3d3 75%);background-size:10px 10px;background-position:5px 0,10px 5px"></div>
<div class="a" style="left:1114px;top:684px;width:19px;height:22px;border:1px solid #9a9a9a;background:#d8d8d8"></div>
<svg class="a" style="left:1118px;top:690px" width="11" height="8"><path d="M1.8 1.8L5.5 5.5L9.2 1.8" fill="none" stroke="#000" stroke-width="2"/></svg>

<div class="a cb" style="left:328px;top:710px"></div><div class="a cb" style="left:328px;top:732px"></div><div class="a cb" style="left:328px;top:754px"></div><div class="a cb" style="left:328px;top:776px"></div><svg class="a" style="left:0;top:0" width="1204" height="854"><text x="337.5" y="813" font-family="Liberation Sans" font-size="12" fill="#333">Passive</text></svg>
<div class="a" id="bbar2" style="left:313px;top:806px;width:879px;height:36px;background:#003366"></div>

<!-- bottom button -->
<div class="a" style="left:307px;top:799px;width:205px;height:46px;border:4px solid #f4403f"></div>
<div class="a" style="left:315px;top:808.5px;width:193px;height:30.5px;border-radius:4px;background:#e2dcdc"></div>
<svg class="a" style="left:322px;top:809px" width="26" height="30" viewBox="322 809 26 30">
 <path d="M332.8 828.5L334.7 836.4L336.6 828.5Z" fill="#003366"/>
 <circle cx="334.7" cy="820.7" r="8.2" fill="none" stroke="#003366" stroke-width="3"/>
 <path d="M331.5 820.7H337.9M334.7 817.5V823.9" stroke="#003366" stroke-width="1.1"/>
</svg>
<svg class="a" style="left:0;top:0;pointer-events:none" width="1204" height="854" viewBox="0 0 1204 854">
<text x="542.8" y="23.9" font-family="Liberation Sans" font-size="12" font-weight="400" fill="#333" textLength="42.4" lengthAdjust="spacingAndGlyphs">Settings</text>
<text x="72.1" y="74.5" font-family="Liberation Sans" font-size="12" font-weight="400" fill="#333" textLength="23.4" lengthAdjust="spacingAndGlyphs">Basil</text>
<text x="128.5" y="109" font-family="Liberation Sans" font-size="13" font-weight="700" fill="#fff" textLength="126.5" lengthAdjust="spacingAndGlyphs">00339 Basil Place, La...</text>
<text x="128.5" y="124.8" font-family="Liberation Sans" font-size="12" font-weight="400" fill="#fff" textLength="51.3" lengthAdjust="spacingAndGlyphs">Las Vegas</text>
<text x="128.5" y="174" font-family="Liberation Sans" font-size="13" font-weight="700" fill="#fff" textLength="126.5" lengthAdjust="spacingAndGlyphs">Heritage Preservatio...</text>
<text x="128.5" y="190" font-family="Liberation Sans" font-size="12" font-weight="400" fill="#fff" textLength="51.3" lengthAdjust="spacingAndGlyphs">Las Vegas</text>
<text x="320.6" y="60.7" font-family="Liberation Sans" font-size="12" font-weight="700" fill="#111" textLength="32.3" lengthAdjust="spacingAndGlyphs">Name</text>
<text x="323.4" y="82.7" font-family="Liberation Sans" font-size="12" font-weight="400" fill="#222" textLength="305.6" lengthAdjust="spacingAndGlyphs">00339 Basil Place, Las Vegas, NV, United States of America</text>
<text x="356.1" y="115" font-family="Liberation Sans" font-size="11" font-weight="400" fill="#222" textLength="74.9" lengthAdjust="spacingAndGlyphs">Address Details</text>
<text x="321" y="140.4" font-family="Liberation Sans" font-size="12" font-weight="400" fill="#222" textLength="89.9" lengthAdjust="spacingAndGlyphs">00339 Basil Place</text>
<text x="321" y="156.2" font-family="Liberation Sans" font-size="12" font-weight="400" fill="#222" textLength="114.2" lengthAdjust="spacingAndGlyphs">Las Vegas, NV, &#x27;89145</text>
<text x="321" y="172.3" font-family="Liberation Sans" font-size="12" font-weight="400" fill="#222" textLength="21.5" lengthAdjust="spacingAndGlyphs">USA</text>
<text x="427.4" y="412.6" font-family="Liberation Sans" font-size="12" font-weight="700" fill="#111" textLength="32.6" lengthAdjust="spacingAndGlyphs">Notes</text>
<text x="973.8" y="412.5" font-family="Liberation Sans" font-size="12" font-weight="400" fill="#333" textLength="99.4" lengthAdjust="spacingAndGlyphs">Display as Warning</text>
<text x="320.7" y="538.7" font-family="Liberation Sans" font-size="12" font-weight="700" fill="#111" textLength="164.0" lengthAdjust="spacingAndGlyphs">Accessible Operational Zones</text>
<text x="322.2" y="561.9" font-family="Liberation Sans" font-size="12" font-weight="400" fill="#222" textLength="13.0" lengthAdjust="spacingAndGlyphs">All</text>
<text x="327.8" y="598" font-family="Liberation Sans" font-size="12" font-weight="700" fill="#111" textLength="69.5" lengthAdjust="spacingAndGlyphs">Visual Alerts</text>
<text x="328" y="623.9" font-family="Liberation Sans" font-size="12" font-weight="400" fill="#333" textLength="34.9" lengthAdjust="spacingAndGlyphs">Theme</text>
<text x="330.5" y="647.8" font-family="Liberation Sans" font-size="12" font-weight="400" fill="#222" textLength="37.6" lengthAdjust="spacingAndGlyphs">Default</text>
<text x="327.4" y="675.9" font-family="Liberation Sans" font-size="12" font-weight="400" fill="#333" textLength="27.8" lengthAdjust="spacingAndGlyphs">Color</text>
<text x="347.5" y="721.1" font-family="Liberation Sans" font-size="12" font-weight="400" fill="#333" textLength="22.5" lengthAdjust="spacingAndGlyphs">Bold</text>
<text x="347.5" y="742.8" font-family="Liberation Sans" font-size="12" font-weight="400" fill="#333" textLength="24.1" lengthAdjust="spacingAndGlyphs">Italic</text>
<text x="347.5" y="764.9" font-family="Liberation Sans" font-size="12" font-weight="400" fill="#333" textLength="50.4" lengthAdjust="spacingAndGlyphs">Underline</text>
<text x="347.5" y="786.7" font-family="Liberation Sans" font-size="12" font-weight="400" fill="#333" textLength="70.9" lengthAdjust="spacingAndGlyphs">Strikethrough</text>
<text x="353.8" y="829.1" font-family="Liberation Sans" font-size="12.7" font-weight="400" fill="#222" textLength="145.2" lengthAdjust="spacingAndGlyphs">Indoor Location Points (2)</text>
<text x="1078.1" y="351" font-family="Liberation Sans" font-size="11.5" font-weight="400" fill="#222" textLength="57.1" lengthAdjust="spacingAndGlyphs" stroke="#fff" stroke-width="1.6" paint-order="stroke" stroke-opacity="0.6">10000 miles</text>
<text x="992" y="382.6" font-family="Liberation Sans" font-size="11" font-weight="400" fill="#333" textLength="132.9" lengthAdjust="spacingAndGlyphs">© 2024 Microsoft Corporation</text>
<text x="1019" y="117.4" font-family="Liberation Sans" font-size="11" font-weight="400" fill="#a9a9a9" textLength="29.2" lengthAdjust="spacingAndGlyphs">Aerial</text>
<text x="1053.2" y="117.4" font-family="Liberation Sans" font-size="11" font-weight="700" fill="#777" textLength="27.1" lengthAdjust="spacingAndGlyphs">Road</text>
<text x="352.6" y="375.6" font-family="Liberation Sans" font-size="15.5" font-weight="700" fill="#eaeef7" stroke="#8f9bb0" stroke-width="1.2" paint-order="stroke" textLength="27.9" lengthAdjust="spacingAndGlyphs">bing</text>
</svg>
</body></html>
